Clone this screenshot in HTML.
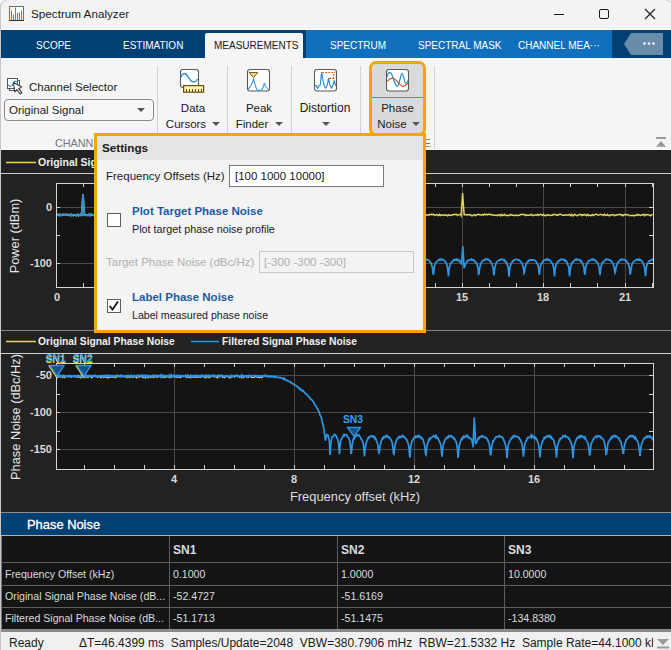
<!DOCTYPE html>
<html><head><meta charset="utf-8">
<style>
*{margin:0;padding:0;box-sizing:border-box}
html,body{width:671px;height:650px;overflow:hidden;background:#f3f3f3;font-family:"Liberation Sans",sans-serif;position:relative}
.a{position:absolute;white-space:nowrap}
.tab{position:absolute;top:41px;color:#fff;font-size:10px;line-height:10px;letter-spacing:0px}
.rb{position:absolute;color:#1a1a1a;font-size:11.5px;line-height:16px;text-align:center}
.sep{position:absolute;top:66px;width:1px;height:83px;background:#d2d2d2}
.arr{position:absolute;width:0;height:0;border-left:4px solid transparent;border-right:4px solid transparent;border-top:4px solid #555}
.lbl{position:absolute;font-size:11px;color:#d9d9d9;font-weight:bold;line-height:12px}
svg{position:absolute;left:0;top:0}
div{white-space:nowrap}
.grid{stroke:#4a4a4a;stroke-width:1}
.tick{stroke:#d0d0d0;stroke-width:1}
.tcell{position:absolute;font-size:10.6px;color:#dcdcdc;line-height:12px}
.st{position:absolute;top:637px;font-size:12px;color:#1a1a1a;line-height:12px}
</style></head><body>
<!-- window left border -->
<div class="a" style="left:0;top:0;width:1px;height:650px;background:#c8c8c8"></div>
<!-- title bar -->
<svg width="671" height="12" style="left:0;top:0">
  <path d="M0,0 L6,0 Q0.8,0.8 0,6 Z" fill="#f7f7f7"/>
  <path d="M0.6,7 Q0.9,0.9 6.5,0.5" stroke="#cdcdcd" stroke-width="1" fill="none"/>
  <path d="M666,0 Q670,0.8 671,2.5" stroke="#d0d0d0" stroke-width="1" fill="none"/>
</svg>
<svg width="30" height="30" style="left:0;top:0">
  <rect x="9.5" y="6.5" width="14" height="14" fill="#fff" stroke="#6e6e6e" stroke-width="1"/>
  <line x1="9" y1="20.5" x2="24" y2="20.5" stroke="#333" stroke-width="1"/>
  <g stroke="#3b8fd4" stroke-width="1.1">
    <line x1="11.5" y1="20" x2="11.5" y2="10.5"/>
    <line x1="13.5" y1="20" x2="13.5" y2="14.5"/>
    <line x1="15.5" y1="20" x2="15.5" y2="7.5"/>
    <line x1="17.5" y1="20" x2="17.5" y2="12.5"/>
    <line x1="19.5" y1="20" x2="19.5" y2="12.5"/>
    <line x1="21.5" y1="20" x2="21.5" y2="10.5"/>
  </g>
</svg>
<div class="a" style="left:31px;top:7px;font-size:11.7px;line-height:14px;color:#1a1a1a">Spectrum Analyzer</div>
<svg width="671" height="30" style="left:0;top:0">
  <line x1="554" y1="14.5" x2="564" y2="14.5" stroke="#1a1a1a" stroke-width="1"/>
  <rect x="599.5" y="9.5" width="9" height="9" rx="1.5" fill="none" stroke="#1a1a1a" stroke-width="1"/>
  <path d="M645,9 L655,19 M655,9 L645,19" stroke="#1a1a1a" stroke-width="1.1"/>
</svg>

<!-- tab bar -->
<div class="a" style="left:1px;top:29px;width:670px;height:1px;background:#fdfdfd"></div>
<div class="a" style="left:1px;top:30px;width:670px;height:28px;background:#023f73"></div>
<div class="a" style="left:306px;top:30px;width:306px;height:28px;background:#1170bd"></div>
<div class="a" style="left:205px;top:33px;width:98px;height:25px;background:#f5f5f5;border-radius:2px 2px 0 0"></div>
<div class="tab" style="left:36px">SCOPE</div>
<div class="tab" style="left:123px">ESTIMATION</div>
<div class="tab" style="left:214px;color:#1a1a1a">MEASUREMENTS</div>
<div class="tab" style="left:330px">SPECTRUM</div>
<div class="tab" style="left:418px">SPECTRAL MASK</div>
<div class="tab" style="left:518px">CHANNEL MEA···</div>
<svg width="671" height="60" style="left:0;top:0">
  <path d="M624,44 L631,33 L663,33 L663,55 L631,55 Z" fill="#6a8cab"/>
  <circle cx="644.5" cy="43.5" r="1.3" fill="#fff"/>
  <circle cx="649" cy="43.5" r="1.3" fill="#fff"/>
  <circle cx="653.5" cy="43.5" r="1.3" fill="#fff"/>
</svg>

<!-- ribbon -->
<div class="a" style="left:1px;top:58px;width:670px;height:92px;background:#f5f5f5"></div>
<svg width="30" height="30" style="left:0;top:70px">
  <g transform="translate(0,-70)">
  <rect x="9.5" y="80.5" width="10" height="10" fill="#fff" stroke="#555" stroke-width="1"/>
  <rect x="7.5" y="78.5" width="10" height="10" fill="#fff" stroke="#555" stroke-width="1"/>
  <path d="M8,84.5 C10,87.5 12,86.5 13,84 C14,81 16.5,80.5 17.5,82.5" stroke="#2a8ad8" stroke-width="1.1" fill="none"/>
  <path d="M13.4,82.6 L14.8,91.8 L16.9,89.7 L20.1,94 L21.9,92.8 L18.8,88.7 L21.8,86.9 Z" fill="#fff" stroke="#3a3a3a" stroke-width="1.1" stroke-linejoin="round"/>
  </g>
</svg>
<div class="a" style="left:29px;top:80px;font-size:11.5px;line-height:14px;color:#1a1a1a">Channel Selector</div>
<div class="a" style="left:4px;top:99px;width:150px;height:22px;border:1px solid #8a8a8a;border-radius:4px;background:#f7f7f7"></div>
<div class="a" style="left:9px;top:103px;font-size:11.5px;line-height:14px;color:#1a1a1a">Original Signal</div>
<div class="arr" style="left:137px;top:108px"></div>
<div class="a" style="left:55px;top:138px;font-size:10.8px;line-height:10px;color:#6f7882">CHANNELS</div>

<div class="sep" style="left:157px"></div>
<div class="sep" style="left:227px"></div>
<div class="sep" style="left:291px"></div>
<div class="sep" style="left:360px"></div>
<div class="sep" style="left:434px"></div>

<!-- Data cursors icon -->
<svg width="40" height="40" style="left:170px;top:60px">
  <rect x="10.5" y="9.5" width="18" height="18" rx="2.5" fill="#fff" stroke="#5a5a5a" stroke-width="1.1"/>
  <path d="M11,17.2 C12.5,12.3 16,12.5 18.5,17.5 C21,22.5 25,23.5 27.7,19" stroke="#1f86d4" stroke-width="1.2" fill="none"/>
  <rect x="13.6" y="25.6" width="20" height="6.6" fill="#fff3b8" stroke="#6b5200" stroke-width="1.2"/>
  <path d="M16.5,29 v3 M19.5,29 v3 M22.5,29 v3 M25.5,29 v3 M28.5,29 v3 M31.5,29 v3" stroke="#6b5200" stroke-width="1"/>
</svg>
<div class="rb" style="left:160px;top:100px;width:66px">Data</div>
<div class="rb" style="left:164px;top:116px;width:44px">Cursors</div>
<div class="arr" style="left:212px;top:122px"></div>

<!-- Peak finder icon -->
<svg width="40" height="40" style="left:240px;top:60px">
  <rect x="7.5" y="9.5" width="22" height="21.5" rx="2.5" fill="#fff" stroke="#5a5a5a" stroke-width="1.1"/>
  <path d="M8,29.5 Q11.5,26 13.6,19.2 Q15.5,27 17,29.5 Q19,31.5 21.5,30 Q23,28.5 24.4,23 Q25.5,28 29,29.5" stroke="#3a95e0" stroke-width="1.1" fill="none"/>
  <path d="M9.2,12.6 L17.8,12.6 L13.5,17.4 Z" fill="#f7e98f" stroke="#6b5200" stroke-width="1" stroke-linejoin="round"/>
</svg>
<div class="rb" style="left:226px;top:100px;width:66px">Peak</div>
<div class="rb" style="left:234px;top:116px;width:36px">Finder</div>
<div class="arr" style="left:275px;top:122px"></div>

<!-- Distortion icon -->
<svg width="40" height="40" style="left:306px;top:60px">
  <rect x="8.5" y="9.5" width="22" height="21.5" rx="2.5" fill="#fff" stroke="#5a5a5a" stroke-width="1.1"/>
  <path d="M16.2,12.5 H29.5 M27.6,14 V17.5 M23.2,18.4 H29.5" stroke="#e0501c" stroke-width="1.1" fill="none" stroke-dasharray="1.8,1.3"/>
  <path d="M8.9,25.6 L10.3,25.6 L11.5,28.5 L13,25.6 L14.2,25.3 L15.6,12.5 L16.9,19.9 L18.1,25.6 L19.6,28.2 L21.1,25.6 L22.6,18.4 L23.8,24.7 L25.5,28.2 L27,25.3 L28.2,20.5 L29.7,25.6" stroke="#1f86d4" stroke-width="1.1" fill="none" stroke-linejoin="round"/>
</svg>
<div class="rb" style="left:291px;top:100px;width:68px;font-size:12px">Distortion</div>
<div class="arr" style="left:322px;top:122px"></div>

<!-- Phase noise button (active) -->
<div class="a" style="left:369px;top:61px;width:57px;height:75px;border:3px solid #f5a500;border-radius:7px;background:#dadada"></div>
<div class="a" style="left:372px;top:97px;width:51px;height:1px;background:#3d8fd6"></div>
<svg width="40" height="40" style="left:378px;top:60px">
  <rect x="8.5" y="9.5" width="22" height="21.5" rx="2.5" fill="#fff" stroke="#5a5a5a" stroke-width="1.1"/>
  <path d="M9,21.4 C10.5,19.5 12.5,18.1 14.5,18.1 C18.5,18.1 21.5,26.4 25,26.4 C27,26.4 28.8,24.5 30,23.2" stroke="#e0561e" stroke-width="1.2" fill="none"/>
  <path d="M8.9,17 C9.8,13.5 10.8,12.4 12.1,12.4 C14.5,12.4 16.5,26.3 19.3,26.3 C21.5,26.3 22.4,13.3 24,13.3 C25.6,13.3 26.3,23.5 27.9,23.5 C28.8,23.5 29.6,21.5 29.9,20.5" stroke="#1f86d4" stroke-width="1.2" fill="none"/>
</svg>
<div class="rb" style="left:369px;top:100px;width:57px">Phase</div>
<div class="rb" style="left:375px;top:116px;width:34px">Noise</div>
<div class="arr" style="left:412px;top:122px"></div>
<div class="a" style="left:345.5px;top:138px;width:100px;text-align:center;font-size:10.5px;line-height:10px;color:#6f7882">PHASE NOISE</div>

<svg width="20" height="20" style="left:650px;top:136px">
  <rect x="6" y="1" width="10" height="2" fill="#9a9a9a"/>
  <path d="M6,10.8 L11,5 L16,10.8 Z" fill="#9a9a9a"/>
</svg>

<!-- plot area background -->
<div class="a" style="left:1px;top:149px;width:670px;height:1px;background:#fcfcfc"></div>
<div class="a" style="left:1px;top:150px;width:670px;height:362px;background:#222222"></div>
<div class="a" style="left:1px;top:173px;width:670px;height:1px;background:#cdcdcd"></div>
<div class="a" style="left:1px;top:330px;width:670px;height:1px;background:#858585"></div>
<div class="a" style="left:1px;top:353px;width:670px;height:1px;background:#d2d2d2"></div>

<!-- plot 1 -->
<svg width="671" height="650">
  <rect x="56" y="183" width="598" height="105" fill="#141414"/>
  <line x1="56.5" y1="183" x2="56.5" y2="187" class="tick"/>
<line x1="56.5" y1="283" x2="56.5" y2="287" class="tick"/>
<line x1="83.5" y1="183" x2="83.5" y2="187" class="tick"/>
<line x1="83.5" y1="283" x2="83.5" y2="287" class="tick"/>
<line x1="110.5" y1="183" x2="110.5" y2="187" class="tick"/>
<line x1="110.5" y1="283" x2="110.5" y2="287" class="tick"/>
<line x1="137.5" y1="183" x2="137.5" y2="287" class="grid"/>
<line x1="137.5" y1="183" x2="137.5" y2="187" class="tick"/>
<line x1="137.5" y1="283" x2="137.5" y2="287" class="tick"/>
<line x1="164.5" y1="183" x2="164.5" y2="187" class="tick"/>
<line x1="164.5" y1="283" x2="164.5" y2="287" class="tick"/>
<line x1="191.5" y1="183" x2="191.5" y2="187" class="tick"/>
<line x1="191.5" y1="283" x2="191.5" y2="287" class="tick"/>
<line x1="219.5" y1="183" x2="219.5" y2="287" class="grid"/>
<line x1="219.5" y1="183" x2="219.5" y2="187" class="tick"/>
<line x1="219.5" y1="283" x2="219.5" y2="287" class="tick"/>
<line x1="246.5" y1="183" x2="246.5" y2="187" class="tick"/>
<line x1="246.5" y1="283" x2="246.5" y2="287" class="tick"/>
<line x1="273.5" y1="183" x2="273.5" y2="187" class="tick"/>
<line x1="273.5" y1="283" x2="273.5" y2="287" class="tick"/>
<line x1="300.5" y1="183" x2="300.5" y2="287" class="grid"/>
<line x1="300.5" y1="183" x2="300.5" y2="187" class="tick"/>
<line x1="300.5" y1="283" x2="300.5" y2="287" class="tick"/>
<line x1="327.5" y1="183" x2="327.5" y2="187" class="tick"/>
<line x1="327.5" y1="283" x2="327.5" y2="287" class="tick"/>
<line x1="354.5" y1="183" x2="354.5" y2="187" class="tick"/>
<line x1="354.5" y1="283" x2="354.5" y2="287" class="tick"/>
<line x1="381.5" y1="183" x2="381.5" y2="287" class="grid"/>
<line x1="381.5" y1="183" x2="381.5" y2="187" class="tick"/>
<line x1="381.5" y1="283" x2="381.5" y2="287" class="tick"/>
<line x1="408.5" y1="183" x2="408.5" y2="187" class="tick"/>
<line x1="408.5" y1="283" x2="408.5" y2="287" class="tick"/>
<line x1="435.5" y1="183" x2="435.5" y2="187" class="tick"/>
<line x1="435.5" y1="283" x2="435.5" y2="287" class="tick"/>
<line x1="462.5" y1="183" x2="462.5" y2="287" class="grid"/>
<line x1="462.5" y1="183" x2="462.5" y2="187" class="tick"/>
<line x1="462.5" y1="283" x2="462.5" y2="287" class="tick"/>
<line x1="489.5" y1="183" x2="489.5" y2="187" class="tick"/>
<line x1="489.5" y1="283" x2="489.5" y2="287" class="tick"/>
<line x1="516.5" y1="183" x2="516.5" y2="187" class="tick"/>
<line x1="516.5" y1="283" x2="516.5" y2="287" class="tick"/>
<line x1="543.5" y1="183" x2="543.5" y2="287" class="grid"/>
<line x1="543.5" y1="183" x2="543.5" y2="187" class="tick"/>
<line x1="543.5" y1="283" x2="543.5" y2="287" class="tick"/>
<line x1="570.5" y1="183" x2="570.5" y2="187" class="tick"/>
<line x1="570.5" y1="283" x2="570.5" y2="287" class="tick"/>
<line x1="597.5" y1="183" x2="597.5" y2="187" class="tick"/>
<line x1="597.5" y1="283" x2="597.5" y2="287" class="tick"/>
<line x1="625.5" y1="183" x2="625.5" y2="287" class="grid"/>
<line x1="625.5" y1="183" x2="625.5" y2="187" class="tick"/>
<line x1="625.5" y1="283" x2="625.5" y2="287" class="tick"/>
<line x1="652.5" y1="183" x2="652.5" y2="187" class="tick"/>
<line x1="652.5" y1="283" x2="652.5" y2="287" class="tick"/>
<line x1="56" y1="207.5" x2="653" y2="207.5" class="grid"/>
<line x1="56" y1="263.5" x2="653" y2="263.5" class="grid"/>
<line x1="56" y1="207.5" x2="60" y2="207.5" class="tick"/>
<line x1="649" y1="207.5" x2="653" y2="207.5" class="tick"/>
<line x1="56" y1="235.5" x2="60" y2="235.5" class="tick"/>
<line x1="649" y1="235.5" x2="653" y2="235.5" class="tick"/>
<line x1="56" y1="263.5" x2="60" y2="263.5" class="tick"/>
<line x1="649" y1="263.5" x2="653" y2="263.5" class="tick"/>
  <path d="M56.5,214.7 L57.5,214.4 L58.5,215.2 L59.5,214.3 L60.5,215.1 L61.5,214.8 L62.5,214.3 L63.5,215.0 L64.5,214.3 L65.5,214.9 L66.5,214.3 L67.5,214.3 L68.5,214.9 L69.5,215.5 L70.5,214.4 L71.5,214.6 L72.5,215.2 L73.5,215.7 L74.5,215.1 L75.5,214.8 L76.5,215.8 L77.5,214.3 L78.5,215.6 L79.5,214.7 L80.5,214.4 L81.5,214.4 L84.5,214.5 L81.5,214.7 L83.0,194.0 L84.5,215.1 L85.5,215.1 L86.5,215.2 L87.5,214.8 L88.5,215.1 L89.5,214.3 L90.5,214.3 L91.5,214.5 L92.5,215.3 L93.5,214.9 L94.5,214.7 L95.5,215.1 L96.5,214.9 L97.5,214.7 L98.5,215.5 L99.5,215.3 L100.5,214.6 L101.5,215.1 L102.5,215.0 L103.5,215.6 L104.5,215.4 L105.5,214.7 L106.5,215.8 L107.5,214.4 L108.5,214.9 L109.5,215.4 L110.5,214.4 L111.5,215.0 L112.5,214.3 L113.5,215.3 L114.5,215.4 L115.5,215.1 L116.5,215.6 L117.5,214.7 L118.5,215.3 L119.5,215.2 L120.5,215.1 L121.5,214.9 L122.5,215.5 L123.5,215.7 L124.5,215.0 L125.5,215.3 L126.5,214.3 L127.5,215.3 L128.5,215.2 L129.5,215.8 L130.5,215.5 L131.5,214.7 L132.5,214.8 L133.5,215.3 L134.5,214.2 L135.5,214.9 L136.5,214.5 L137.5,214.4 L138.5,214.3 L139.5,215.4 L140.5,214.4 L141.5,214.6 L142.5,214.8 L143.5,215.6 L144.5,214.3 L145.5,214.9 L146.5,215.1 L147.5,215.6 L148.5,215.5 L149.5,215.6 L150.5,214.6 L151.5,214.9 L152.5,214.8 L153.5,215.6 L154.5,215.7 L155.5,214.4 L156.5,214.5 L157.5,214.6 L158.5,214.6 L159.5,215.0 L160.5,215.1 L161.5,214.6 L162.5,214.2 L163.5,214.9 L164.5,214.8 L165.5,215.1 L166.5,215.7 L167.5,215.3 L168.5,215.0 L169.5,215.2 L170.5,215.3 L171.5,214.3 L172.5,215.6 L173.5,215.4 L174.5,215.6 L175.5,215.5 L176.5,214.8 L177.5,214.8 L178.5,214.4 L179.5,215.2 L180.5,214.3 L181.5,214.3 L182.5,214.5 L183.5,214.5 L184.5,214.7 L185.5,214.3 L186.5,214.2 L187.5,214.4 L188.5,214.4 L189.5,214.8 L190.5,214.2 L191.5,215.6 L192.5,215.2 L193.5,214.4 L194.5,214.6 L195.5,214.8 L196.5,214.8 L197.5,214.4 L198.5,215.6 L199.5,215.8 L200.5,214.9 L201.5,215.0 L202.5,214.3 L203.5,214.4 L204.5,214.7 L205.5,214.6 L206.5,215.5 L207.5,214.5 L208.5,214.2 L209.5,215.7 L210.5,215.0 L211.5,214.4 L212.5,215.1 L213.5,214.2 L214.5,215.0 L215.5,215.8 L216.5,215.6 L217.5,215.3 L218.5,214.6 L219.5,214.8 L220.5,214.5 L221.5,215.4 L222.5,215.1 L223.5,215.4 L224.5,214.7 L225.5,214.6 L226.5,215.5 L227.5,215.8 L228.5,215.6 L229.5,215.5 L230.5,215.5 L231.5,215.4 L232.5,214.6 L233.5,215.0 L234.5,214.8 L235.5,214.2 L236.5,214.2 L237.5,214.6 L238.5,214.6 L239.5,215.3 L240.5,215.7 L241.5,214.9 L242.5,215.7 L243.5,215.8 L244.5,215.7 L245.5,214.8 L246.5,214.6 L247.5,214.6 L248.5,214.5 L249.5,214.5 L250.5,215.2 L251.5,215.6 L252.5,215.5 L253.5,215.0 L254.5,215.2 L255.5,215.5 L256.5,214.3 L257.5,215.3 L258.5,215.7 L259.5,215.5 L260.5,215.4 L261.5,215.0 L262.5,214.5 L263.5,215.5 L264.5,214.7 L265.5,215.5 L266.5,215.8 L267.5,214.8 L268.5,214.8 L269.5,215.7 L270.5,215.4 L271.5,214.5 L272.5,214.4 L273.5,214.4 L274.5,215.6 L275.5,215.5 L276.5,214.4 L277.5,215.5 L278.5,215.8 L279.5,215.3 L280.5,214.8 L281.5,215.1 L282.5,214.4 L283.5,214.2 L284.5,215.8 L285.5,215.2 L286.5,215.0 L287.5,215.7 L288.5,214.9 L289.5,215.6 L290.5,215.5 L291.5,214.5 L292.5,214.6 L293.5,214.7 L294.5,214.6 L295.5,215.1 L296.5,214.6 L297.5,214.9 L298.5,214.4 L299.5,215.7 L300.5,214.8 L301.5,214.9 L302.5,215.1 L303.5,215.6 L304.5,214.9 L305.5,215.7 L306.5,215.0 L307.5,215.1 L308.5,215.0 L309.5,214.2 L310.5,214.9 L311.5,214.5 L312.5,214.2 L313.5,215.5 L314.5,214.5 L315.5,215.0 L316.5,215.4 L317.5,215.1 L318.5,214.7 L319.5,215.0 L320.5,215.1 L321.5,215.5 L322.5,214.4 L323.5,215.1 L324.5,214.6 L325.5,214.6 L326.5,215.4 L327.5,215.0 L328.5,215.1 L329.5,215.4 L330.5,215.7 L331.5,214.9 L332.5,215.2 L333.5,215.0 L334.5,215.0 L335.5,215.3 L336.5,214.9 L337.5,215.1 L338.5,215.0 L339.5,215.7 L340.5,215.3 L341.5,215.6 L342.5,215.7 L343.5,214.6 L344.5,215.1 L345.5,215.7 L346.5,215.5 L347.5,214.4 L348.5,214.4 L349.5,214.9 L350.5,214.3 L351.5,214.6 L352.5,214.3 L353.5,215.3 L354.5,215.5 L355.5,215.6 L356.5,214.4 L357.5,215.3 L358.5,215.3 L359.5,214.4 L360.5,215.6 L361.5,215.7 L362.5,214.6 L363.5,215.7 L364.5,214.8 L365.5,215.0 L366.5,215.8 L367.5,215.5 L368.5,214.5 L369.5,214.9 L370.5,215.0 L371.5,214.7 L372.5,214.5 L373.5,214.7 L374.5,215.4 L375.5,214.2 L376.5,215.1 L377.5,214.9 L378.5,214.2 L379.5,214.7 L380.5,215.2 L381.5,215.0 L382.5,214.3 L383.5,215.8 L384.5,215.5 L385.5,215.8 L386.5,214.4 L387.5,214.6 L388.5,214.3 L389.5,215.4 L390.5,214.6 L391.5,214.4 L392.5,214.9 L393.5,215.7 L394.5,215.5 L395.5,214.6 L396.5,214.4 L397.5,215.7 L398.5,215.1 L399.5,215.3 L400.5,214.3 L401.5,214.3 L402.5,215.3 L403.5,214.9 L404.5,214.3 L405.5,215.7 L406.5,215.2 L407.5,215.5 L408.5,214.3 L409.5,215.6 L410.5,214.3 L411.5,215.6 L412.5,214.9 L413.5,214.7 L414.5,215.1 L415.5,215.7 L416.5,214.6 L417.5,214.4 L418.5,215.0 L419.5,214.6 L420.5,214.4 L421.5,214.5 L422.5,214.3 L423.5,214.5 L424.5,214.7 L425.5,214.7 L426.5,215.4 L427.5,214.7 L428.5,215.0 L429.5,214.5 L430.5,214.8 L431.5,214.2 L432.5,214.6 L433.5,214.2 L434.5,215.4 L435.5,215.1 L436.5,214.5 L437.5,215.0 L438.5,215.7 L439.5,214.4 L440.5,215.5 L441.5,214.9 L442.5,215.0 L443.5,215.5 L444.5,214.8 L445.5,215.0 L446.5,215.3 L447.5,215.8 L448.5,214.7 L449.5,215.5 L450.5,215.3 L451.5,215.2 L452.5,214.8 L453.5,214.8 L454.5,214.3 L455.5,214.4 L456.5,214.3 L457.5,215.4 L458.5,214.6 L459.5,214.5 L460.5,214.3 L461.1,215.5 L462.6,193.0 L464.1,214.7 L464.5,214.7 L465.5,214.6 L466.5,214.7 L467.5,214.9 L468.5,214.5 L469.5,214.9 L470.5,214.6 L471.5,215.7 L472.5,215.8 L473.5,215.1 L474.5,214.6 L475.5,215.7 L476.5,214.7 L477.5,214.8 L478.5,214.2 L479.5,214.8 L480.5,215.0 L481.5,215.0 L482.5,214.5 L483.5,215.0 L484.5,214.2 L485.5,214.6 L486.5,214.3 L487.5,214.8 L488.5,214.3 L489.5,214.2 L490.5,214.7 L491.5,214.6 L492.5,215.1 L493.5,215.0 L494.5,215.4 L495.5,215.3 L496.5,215.3 L497.5,215.6 L498.5,214.8 L499.5,214.7 L500.5,215.8 L501.5,214.4 L502.5,215.4 L503.5,215.2 L504.5,214.3 L505.5,215.5 L506.5,215.6 L507.5,215.2 L508.5,215.4 L509.5,215.5 L510.5,214.4 L511.5,215.0 L512.5,215.0 L513.5,215.5 L514.5,215.5 L515.5,215.5 L516.5,215.1 L517.5,215.6 L518.5,215.3 L519.5,215.3 L520.5,214.6 L521.5,214.2 L522.5,214.4 L523.5,214.8 L524.5,214.4 L525.5,215.5 L526.5,215.1 L527.5,215.2 L528.5,215.2 L529.5,215.3 L530.5,215.0 L531.5,214.2 L532.5,215.5 L533.5,215.4 L534.5,215.0 L535.5,215.1 L536.5,215.3 L537.5,214.3 L538.5,215.4 L539.5,214.6 L540.5,214.3 L541.5,214.6 L542.5,215.4 L543.5,214.5 L544.5,215.4 L545.5,215.8 L546.5,215.0 L547.5,214.8 L548.5,215.0 L549.5,215.3 L550.5,215.4 L551.5,215.2 L552.5,215.2 L553.5,214.3 L554.5,214.4 L555.5,214.6 L556.5,215.4 L557.5,214.7 L558.5,215.1 L559.5,214.2 L560.5,214.3 L561.5,214.6 L562.5,215.3 L563.5,215.3 L564.5,215.3 L565.5,214.7 L566.5,215.0 L567.5,214.9 L568.5,214.9 L569.5,214.4 L570.5,215.6 L571.5,214.5 L572.5,215.8 L573.5,215.7 L574.5,214.2 L575.5,214.9 L576.5,215.5 L577.5,215.7 L578.5,214.9 L579.5,214.6 L580.5,214.5 L581.5,215.7 L582.5,214.5 L583.5,215.1 L584.5,214.4 L585.5,215.0 L586.5,215.7 L587.5,214.4 L588.5,215.5 L589.5,215.0 L590.5,215.6 L591.5,215.3 L592.5,214.6 L593.5,215.6 L594.5,215.0 L595.5,214.2 L596.5,214.2 L597.5,215.0 L598.5,214.9 L599.5,214.7 L600.5,214.4 L601.5,214.8 L602.5,214.7 L603.5,215.5 L604.5,214.2 L605.5,215.4 L606.5,215.5 L607.5,214.4 L608.5,215.7 L609.5,215.3 L610.5,215.6 L611.5,214.7 L612.5,214.8 L613.5,214.8 L614.5,215.8 L615.5,215.1 L616.5,214.8 L617.5,214.9 L618.5,214.6 L619.5,214.3 L620.5,214.4 L621.5,215.5 L622.5,214.7 L623.5,215.7 L624.5,214.6 L625.5,214.6 L626.5,215.0 L627.5,214.5 L628.5,214.8 L629.5,215.7 L630.5,215.6 L631.5,215.5 L632.5,215.2 L633.5,215.7 L634.5,215.7 L635.5,215.1 L636.5,215.4 L637.5,214.3 L638.5,215.4 L639.5,214.9 L640.5,215.4 L641.5,215.2 L642.5,214.7 L643.5,214.3 L644.5,215.7 L645.5,214.4 L646.5,215.0 L647.5,214.7 L648.5,214.7 L649.5,215.4 L650.5,215.8 L651.5,214.6 L652.5,215.2" stroke="#e8d44a" stroke-width="1.5" fill="none"/>
  <path d="M56.5,214.7 L57.0,215.1 L57.5,214.9 L58.0,214.5 L58.5,214.5 L59.0,214.6 L59.5,215.6 L60.0,215.0 L60.5,214.6 L61.0,215.6 L61.5,215.7 L62.0,214.9 L62.5,214.5 L63.0,214.6 L63.5,214.4 L64.0,214.8 L64.5,214.4 L65.0,214.6 L65.5,214.7 L66.0,215.1 L66.5,215.5 L67.0,215.3 L67.5,214.9 L68.0,214.9 L68.5,215.0 L69.0,214.8 L69.5,214.8 L70.0,214.4 L70.5,214.7 L71.0,215.7 L71.5,214.5 L72.0,215.0 L72.5,215.2 L73.0,215.5 L73.5,214.6 L74.0,214.7 L74.5,214.6 L75.0,214.9 L75.5,214.9 L76.0,215.6 L76.5,215.5 L77.0,215.5 L77.5,214.3 L78.0,214.3 L78.5,215.3 L79.0,215.6 L79.5,215.0 L80.0,215.1 L80.5,214.3 L81.0,214.8 L81.5,215.6 L84.5,214.5 L81.5,215.5 L83.0,194.0 L84.5,215.0 L85.0,215.0 L85.5,215.3 L86.0,215.6 L86.5,215.3 L87.0,215.2 L87.5,215.4 L88.0,214.9 L88.5,215.1 L89.0,214.4 L89.5,215.4 L90.0,214.6 L90.5,215.6 L91.0,215.2 L91.5,214.7 L92.0,214.5 L92.5,214.7 L93.0,215.2 L93.5,215.3 L94.0,214.5 L94.5,214.4 L95.0,215.0 L95.5,215.1 L96.0,214.8 L96.5,214.6 L97.0,215.1 L97.5,214.3 L98.0,214.7 L98.5,214.9 L99.0,215.6 L99.5,215.2 L100.0,215.5 L100.5,215.0 L101.0,214.6 L101.5,214.6 L102.0,215.6 L102.5,215.3 L103.0,214.7 L103.5,214.3 L104.0,215.0 L104.5,215.2 L105.0,214.9 L105.5,214.7 L106.0,215.2 L106.5,215.6 L107.0,214.6 L107.5,214.3 L108.0,214.8 L108.5,214.9 L109.0,215.3 L109.5,214.6 L110.0,215.4 L110.5,215.3 L111.0,215.0 L111.5,214.6 L112.0,215.7 L112.5,214.7 L113.0,215.4 L113.5,214.6 L114.0,214.6 L114.5,215.4 L115.0,214.7 L115.5,215.6 L116.0,215.0 L116.5,214.6 L117.0,214.6 L117.5,214.9 L118.0,215.2 L118.5,215.6 L119.0,214.5 L119.5,214.9 L120.0,214.6 L120.5,215.7 L121.0,214.5 L121.5,214.4 L122.0,214.4 L122.5,214.9 L123.0,215.6 L123.5,215.5 L124.0,215.3 L124.5,215.7 L125.0,215.6 L125.5,214.8 L126.0,214.6 L126.5,215.6 L127.0,215.3 L127.5,214.3 L128.0,215.2 L128.5,214.8 L129.0,214.8 L129.5,214.8 L130.0,214.5 L130.5,214.3 L131.0,214.7 L131.5,214.8 L132.0,215.6 L132.5,214.5 L133.0,215.6 L133.5,214.6 L134.0,214.8 L134.5,215.5 L135.0,215.5 L135.5,214.9 L136.0,214.4 L136.5,215.0 L137.0,214.8 L137.5,215.6 L138.0,214.6 L138.5,214.8 L139.0,215.6 L139.5,214.3 L140.0,214.9 L140.5,215.4 L141.0,215.4 L141.5,214.4 L142.0,214.3 L142.5,214.4 L143.0,215.6 L143.5,214.7 L144.0,215.3 L144.5,215.6 L145.0,214.8 L145.5,214.7 L146.0,215.6 L146.5,215.2 L147.0,214.7 L147.5,215.3 L148.0,214.7 L148.5,214.7 L149.0,214.3 L149.5,215.4 L150.0,215.6 L150.5,215.2 L151.0,215.6 L151.5,214.3 L152.0,214.6 L152.5,215.0 L153.0,215.6 L153.5,215.6 L154.0,214.8 L154.5,214.7 L155.0,214.9 L155.5,215.0 L156.0,215.6 L156.5,214.6 L157.0,215.4 L157.5,215.3 L158.0,215.5 L158.5,215.4 L159.0,215.2 L159.5,214.8 L160.0,214.7 L160.5,214.8 L161.0,215.4 L161.5,214.4 L162.0,214.6 L162.5,215.4 L163.0,214.6 L163.5,214.4 L164.0,214.3 L164.5,215.1 L165.0,214.8 L165.5,215.7 L166.0,215.5 L166.5,215.7 L167.0,214.7 L167.5,214.4 L168.0,214.4 L168.5,215.0 L169.0,215.3 L169.5,214.9 L170.0,214.6 L170.5,214.9 L171.0,215.2 L171.5,215.2 L172.0,215.3 L172.5,215.5 L173.0,215.2 L173.5,214.5 L174.0,215.5 L174.5,214.7 L175.0,215.1 L175.5,214.8 L176.0,215.3 L176.5,214.6 L177.0,214.6 L177.5,214.6 L178.0,214.5 L178.5,215.5 L179.0,215.1 L179.5,214.8 L180.0,214.9 L180.5,215.7 L181.0,215.0 L181.5,214.6 L182.0,215.4 L182.5,215.2 L183.0,215.7 L183.5,214.4 L184.0,215.0 L184.5,215.4 L185.0,215.5 L185.5,215.6 L186.0,214.4 L186.5,214.7 L187.0,214.5 L187.5,214.6 L188.0,215.7 L188.5,215.1 L189.0,215.6 L189.5,214.8 L190.0,215.5 L190.5,214.9 L191.0,214.7 L191.5,215.4 L192.0,215.6 L192.5,214.4 L193.0,215.1 L193.5,215.2 L194.0,214.6 L194.5,214.8 L195.0,214.5 L195.5,214.6 L196.0,214.7 L196.5,215.1 L197.0,215.2 L197.5,214.6 L198.0,214.3 L198.5,214.8 L199.0,215.2 L199.5,214.6 L200.0,215.0 L200.5,215.0 L201.0,215.0 L201.5,215.0 L202.0,215.0 L202.5,215.0 L203.0,215.0 L203.5,215.0 L204.0,215.0 L204.5,215.0 L205.0,215.0 L205.5,215.0 L206.0,215.0 L206.5,215.1 L207.0,215.1 L207.5,215.1 L208.0,215.1 L208.5,215.1 L209.0,215.1 L209.5,215.1 L210.0,215.1 L210.5,215.1 L211.0,215.1 L211.5,215.2 L212.0,215.2 L212.5,215.2 L213.0,215.2 L213.5,215.2 L214.0,215.2 L214.5,215.2 L215.0,215.3 L215.5,215.3 L216.0,215.3 L216.5,215.3 L217.0,215.3 L217.5,215.4 L218.0,215.4 L218.5,215.4 L219.0,215.4 L219.5,215.4 L220.0,215.5 L220.5,215.5 L221.0,215.5 L221.5,215.5 L222.0,215.6 L222.5,215.6 L223.0,215.6 L223.5,215.7 L224.0,215.7 L224.5,215.7 L225.0,215.7 L225.5,215.8 L226.0,215.8 L226.5,215.8 L227.0,215.9 L227.5,215.9 L228.0,215.9 L228.5,216.0 L229.0,216.0 L229.5,216.0 L230.0,216.1 L230.5,216.1 L231.0,216.1 L231.5,216.2 L232.0,216.2 L232.5,216.2 L233.0,216.3 L233.5,216.3 L234.0,216.4 L234.5,216.4 L235.0,216.4 L235.5,216.5 L236.0,216.5 L236.5,216.6 L237.0,216.6 L237.5,216.7 L238.0,216.7 L238.5,216.8 L239.0,216.8 L239.5,216.8 L240.0,216.9 L240.5,216.9 L241.0,217.0 L241.5,217.0 L242.0,217.1 L242.5,217.1 L243.0,217.2 L243.5,217.2 L244.0,217.3 L244.5,217.3 L245.0,217.4 L245.5,217.4 L246.0,217.5 L246.5,217.6 L247.0,217.6 L247.5,217.7 L248.0,217.7 L248.5,217.8 L249.0,217.8 L249.5,217.9 L250.0,218.0 L250.5,218.0 L251.0,218.1 L251.5,218.1 L252.0,218.2 L252.5,218.3 L253.0,218.3 L253.5,218.4 L254.0,218.5 L254.5,218.5 L255.0,218.6 L255.5,218.6 L256.0,218.7 L256.5,218.8 L257.0,218.8 L257.5,218.9 L258.0,219.0 L258.5,219.1 L259.0,219.1 L259.5,219.2 L260.0,219.3 L260.5,219.3 L261.0,219.4 L261.5,219.5 L262.0,219.5 L262.5,219.6 L263.0,219.7 L263.5,219.8 L264.0,219.8 L264.5,219.9 L265.0,220.0 L265.5,220.1 L266.0,220.2 L266.5,220.2 L267.0,220.3 L267.5,220.4 L268.0,220.5 L268.5,220.6 L269.0,220.6 L269.5,220.7 L270.0,220.8 L270.5,220.9 L271.0,221.0 L271.5,221.1 L272.0,221.1 L272.5,221.2 L273.0,221.3 L273.5,221.4 L274.0,221.5 L274.5,221.6 L275.0,221.7 L275.5,221.7 L276.0,221.8 L276.5,221.9 L277.0,222.0 L277.5,222.1 L278.0,222.2 L278.5,222.3 L279.0,222.4 L279.5,222.5 L280.0,222.6 L280.5,222.7 L281.0,222.8 L281.5,222.9 L282.0,223.0 L282.5,223.1 L283.0,223.2 L283.5,223.3 L284.0,223.4 L284.5,223.4 L285.0,223.6 L285.5,223.7 L286.0,223.8 L286.5,223.9 L287.0,224.0 L287.5,224.1 L288.0,224.2 L288.5,224.3 L289.0,224.4 L289.5,224.5 L290.0,224.6 L290.5,224.7 L291.0,224.8 L291.5,224.9 L292.0,225.0 L292.5,225.1 L293.0,225.2 L293.5,225.3 L294.0,225.5 L294.5,225.6 L295.0,225.7 L295.5,225.8 L296.0,225.9 L296.5,226.0 L297.0,226.1 L297.5,226.2 L298.0,226.4 L298.5,226.5 L299.0,226.6 L299.5,226.7 L300.0,226.8 L300.5,227.0 L301.0,227.1 L301.5,227.2 L302.0,227.3 L302.5,227.4 L303.0,227.6 L303.5,227.7 L304.0,227.8 L304.5,227.9 L305.0,228.0 L305.5,228.2 L306.0,228.3 L306.5,228.4 L307.0,228.5 L307.5,228.7 L308.0,228.8 L308.5,228.9 L309.0,229.1 L309.5,229.2 L310.0,229.3 L310.5,229.4 L311.0,229.6 L311.5,229.7 L312.0,229.8 L312.5,230.0 L313.0,230.1 L313.5,230.2 L314.0,230.4 L314.5,230.5 L315.0,230.7 L315.5,230.8 L316.0,230.9 L316.5,231.1 L317.0,231.2 L317.5,231.3 L318.0,231.5 L318.5,231.6 L319.0,231.8 L319.5,231.9 L320.0,232.0 L320.5,232.2 L321.0,232.3 L321.5,232.5 L322.0,232.6 L322.5,232.8 L323.0,232.9 L323.5,233.1 L324.0,233.2 L324.5,233.3 L325.0,233.5 L325.5,233.6 L326.0,233.8 L326.5,233.9 L327.0,234.1 L327.5,234.2 L328.0,234.4 L328.5,234.5 L329.0,234.7 L329.5,234.8 L330.0,235.0 L330.5,235.2 L331.0,235.3 L331.5,235.5 L332.0,235.6 L332.5,235.8 L333.0,235.9 L333.5,236.1 L334.0,236.2 L334.5,236.4 L335.0,236.6 L335.5,236.7 L336.0,236.9 L336.5,237.1 L337.0,237.2 L337.5,237.4 L338.0,237.5 L338.5,237.7 L339.0,237.9 L339.5,238.0 L340.0,238.2 L340.5,238.4 L341.0,238.5 L341.5,238.7 L342.0,238.9 L342.5,239.0 L343.0,239.2 L343.5,239.4 L344.0,239.5 L344.5,239.7 L345.0,239.9 L345.5,240.1 L346.0,240.2 L346.5,240.4 L347.0,240.6 L347.5,240.7 L348.0,240.9 L348.5,241.1 L349.0,241.3 L349.5,241.4 L350.0,241.6 L350.5,241.8 L351.0,242.0 L351.5,242.2 L352.0,242.3 L352.5,242.5 L353.0,242.7 L353.5,242.9 L354.0,243.1 L354.5,243.2 L355.0,243.4 L355.5,243.6 L356.0,243.8 L356.5,244.0 L357.0,244.2 L357.5,244.4 L358.0,244.5 L358.5,244.7 L359.0,244.9 L359.5,245.1 L360.0,245.3 L360.5,245.5 L361.0,245.7 L361.5,245.9 L362.0,246.1 L362.5,246.2 L363.0,246.4 L363.5,246.6 L364.0,246.8 L364.5,247.0 L365.0,247.2 L365.5,247.4 L366.0,247.6 L366.5,247.8 L367.0,248.0 L367.5,248.2 L368.0,248.4 L368.5,248.6 L369.0,248.8 L369.5,249.0 L370.0,249.2 L370.5,249.4 L371.0,249.6 L371.5,249.8 L372.0,250.0 L372.5,250.2 L373.0,250.4 L373.5,250.6 L374.0,250.8 L374.5,251.0 L375.0,251.2 L375.5,251.4 L376.0,251.7 L376.5,251.9 L377.0,252.1 L377.5,252.3 L378.0,252.5 L378.5,252.7 L379.0,252.9 L379.5,253.1 L380.0,253.3 L380.5,253.6 L381.0,253.8 L381.5,254.0 L382.0,254.2 L382.5,254.4 L383.0,254.6 L383.5,254.8 L384.0,255.1 L384.5,255.3 L385.0,255.5 L385.5,255.7 L386.0,255.9 L386.5,256.2 L387.0,256.4 L387.5,256.6 L388.0,256.8 L388.5,257.1 L389.0,257.3 L389.5,257.5 L390.0,257.7 L390.5,257.9 L391.0,258.2 L391.5,258.4 L392.0,258.6 L392.5,258.9 L393.0,259.1 L393.5,259.3 L394.0,259.5 L394.5,259.8 L395.0,259.2 L395.5,259.5 L396.0,259.1 L396.5,259.2 L397.0,259.7 L397.5,260.0 L398.0,260.4 L398.5,260.2 L399.0,260.6 L399.5,261.7 L400.0,262.0 L400.5,262.7 L401.0,263.7 L401.5,265.7 L402.0,267.0 L402.5,270.6 L403.0,276.3 L403.5,270.4 L404.0,267.6 L404.5,265.8 L405.0,263.8 L405.5,262.6 L406.0,262.4 L406.5,261.2 L407.0,260.5 L407.5,261.0 L408.0,260.2 L408.5,260.3 L409.0,259.7 L409.5,260.0 L410.0,259.5 L410.5,259.2 L411.0,259.6 L411.5,259.7 L412.0,260.1 L412.5,259.5 L413.0,260.3 L413.5,260.3 L414.0,260.9 L414.5,261.0 L415.0,261.7 L415.5,262.7 L416.0,264.0 L416.5,264.4 L417.0,266.5 L417.5,269.6 L418.0,273.2 L418.5,272.0 L419.0,267.6 L419.5,266.2 L420.0,264.8 L420.5,263.2 L421.0,261.9 L421.5,262.1 L422.0,261.0 L422.5,261.1 L423.0,260.4 L423.5,260.4 L424.0,259.5 L424.5,259.9 L425.0,259.3 L425.5,259.4 L426.0,259.8 L426.5,259.2 L427.0,259.4 L427.5,259.7 L428.0,260.1 L428.5,260.2 L429.0,260.3 L429.5,260.9 L430.0,262.0 L430.5,262.8 L431.0,262.8 L431.5,264.5 L432.0,266.2 L432.5,267.8 L433.0,273.4 L433.5,274.6 L434.0,269.0 L434.5,266.4 L435.0,264.8 L435.5,263.3 L436.0,262.5 L436.5,261.9 L437.0,261.2 L437.5,261.0 L438.0,260.4 L438.5,260.1 L439.0,259.4 L439.5,259.8 L440.0,259.6 L440.5,259.2 L441.0,259.8 L441.5,259.5 L442.0,259.3 L442.5,259.8 L443.0,259.6 L443.5,259.9 L444.0,260.5 L444.5,260.6 L445.0,261.5 L445.5,262.2 L446.0,262.5 L446.5,264.2 L447.0,265.0 L447.5,267.7 L448.0,271.3 L448.5,276.3 L449.0,269.6 L449.5,267.0 L450.0,265.0 L450.5,264.3 L451.0,262.5 L451.5,262.4 L452.0,261.9 L452.5,261.2 L453.0,260.8 L453.5,259.9 L454.0,260.4 L454.5,259.7 L455.0,260.1 L455.5,259.9 L456.0,259.2 L456.5,260.0 L457.0,259.2 L457.5,259.6 L458.0,260.2 L458.5,259.8 L459.0,260.9 L459.5,260.7 L460.0,261.7 L460.5,261.6 L461.0,262.7 L461.5,264.1 L461.5,264.7 L462.8,246.0 L464.1,267.4 L464.5,267.4 L465.0,265.2 L465.5,264.6 L466.0,263.3 L466.5,262.7 L467.0,261.3 L467.5,261.4 L468.0,260.3 L468.5,260.3 L469.0,260.1 L469.5,259.7 L470.0,260.0 L470.5,259.6 L471.0,259.6 L471.5,259.1 L472.0,260.1 L472.5,259.8 L473.0,259.8 L473.5,260.4 L474.0,260.2 L474.5,261.3 L475.0,261.3 L475.5,261.7 L476.0,262.8 L476.5,263.3 L477.0,264.2 L477.5,266.4 L478.0,268.1 L478.5,274.2 L479.0,273.7 L479.5,268.7 L480.0,266.6 L480.5,264.6 L481.0,263.5 L481.5,262.3 L482.0,261.3 L482.5,260.8 L483.0,260.4 L483.5,260.5 L484.0,260.0 L484.5,259.9 L485.0,260.1 L485.5,259.2 L486.0,259.2 L486.5,259.0 L487.0,259.1 L487.5,259.5 L488.0,259.4 L488.5,259.9 L489.0,260.0 L489.5,260.7 L490.0,261.2 L490.5,261.3 L491.0,262.4 L491.5,263.1 L492.0,263.8 L492.5,266.0 L493.0,267.4 L493.5,271.3 L494.0,275.4 L494.5,269.8 L495.0,267.1 L495.5,265.2 L496.0,263.6 L496.5,262.5 L497.0,261.5 L497.5,261.5 L498.0,261.0 L498.5,260.3 L499.0,260.3 L499.5,259.9 L500.0,260.2 L500.5,259.8 L501.0,259.3 L501.5,259.0 L502.0,259.6 L502.5,259.5 L503.0,259.5 L503.5,259.5 L504.0,260.5 L504.5,260.0 L505.0,261.0 L505.5,261.9 L506.0,261.7 L506.5,262.5 L507.0,263.9 L507.5,265.1 L508.0,267.1 L508.5,270.4 L509.0,276.6 L509.5,270.9 L510.0,267.2 L510.5,265.0 L511.0,264.4 L511.5,263.3 L512.0,262.4 L512.5,261.1 L513.0,261.4 L513.5,260.8 L514.0,260.2 L514.5,260.2 L515.0,259.7 L515.5,259.4 L516.0,259.1 L516.5,259.2 L517.0,259.4 L517.5,259.8 L518.0,259.9 L518.5,260.2 L519.0,260.3 L519.5,260.2 L520.0,260.9 L520.5,261.2 L521.0,262.1 L521.5,262.6 L522.0,263.3 L522.5,264.8 L523.0,266.8 L523.5,268.6 L524.0,273.2 L524.5,272.3 L525.0,268.0 L525.5,265.7 L526.0,264.7 L526.5,263.7 L527.0,262.7 L527.5,261.6 L528.0,261.6 L528.5,260.5 L529.0,260.1 L529.5,260.5 L530.0,260.0 L530.5,259.9 L531.0,259.7 L531.5,260.0 L532.0,259.8 L532.5,259.8 L533.0,260.0 L533.5,259.8 L534.0,260.3 L534.5,260.4 L535.0,260.5 L535.5,260.8 L536.0,261.8 L536.5,261.9 L537.0,263.6 L537.5,263.9 L538.0,265.3 L538.5,267.6 L539.0,272.7 L539.5,274.7 L540.0,268.9 L540.5,266.0 L541.0,264.4 L541.5,263.8 L542.0,262.8 L542.5,262.1 L543.0,261.6 L543.5,260.4 L544.0,260.5 L544.5,260.0 L545.0,260.2 L545.5,260.0 L546.0,260.0 L546.5,259.1 L547.0,259.9 L547.5,260.0 L548.0,259.2 L548.5,259.5 L549.0,259.6 L549.5,259.8 L550.0,260.9 L550.5,261.3 L551.0,261.6 L551.5,262.5 L552.0,263.0 L552.5,263.7 L553.0,264.9 L553.5,266.8 L554.0,270.8 L554.5,276.5 L555.0,270.4 L555.5,267.1 L556.0,264.8 L556.5,263.7 L557.0,262.7 L557.5,262.3 L558.0,261.4 L558.5,260.8 L559.0,261.0 L559.5,260.2 L560.0,260.3 L560.5,259.9 L561.0,259.2 L561.5,259.4 L562.0,259.4 L562.5,259.4 L563.0,259.8 L563.5,259.8 L564.0,259.6 L564.5,260.5 L565.0,260.0 L565.5,261.2 L566.0,261.0 L566.5,261.4 L567.0,262.4 L567.5,263.9 L568.0,265.3 L568.5,266.0 L569.0,269.3 L569.5,276.3 L570.0,272.6 L570.5,267.7 L571.0,265.8 L571.5,264.1 L572.0,263.5 L572.5,262.1 L573.0,262.1 L573.5,260.9 L574.0,260.4 L574.5,260.5 L575.0,260.0 L575.5,259.4 L576.0,259.8 L576.5,259.1 L577.0,259.8 L577.5,259.8 L578.0,259.7 L578.5,259.5 L579.0,259.7 L579.5,260.0 L580.0,260.7 L580.5,260.3 L581.0,261.6 L581.5,261.3 L582.0,262.1 L582.5,263.1 L583.0,264.8 L583.5,265.9 L584.0,268.1 L584.5,273.4 L585.0,274.7 L585.5,268.9 L586.0,266.3 L586.5,264.9 L587.0,263.7 L587.5,262.7 L588.0,261.7 L588.5,261.1 L589.0,260.5 L589.5,260.8 L590.0,260.3 L590.5,260.1 L591.0,259.4 L591.5,259.5 L592.0,259.8 L592.5,259.1 L593.0,259.5 L593.5,260.0 L594.0,259.5 L594.5,259.7 L595.0,260.1 L595.5,260.8 L596.0,261.4 L596.5,261.2 L597.0,261.9 L597.5,262.8 L598.0,263.9 L598.5,265.4 L599.0,267.1 L599.5,270.9 L600.0,275.1 L600.5,270.5 L601.0,267.2 L601.5,264.7 L602.0,264.3 L602.5,262.4 L603.0,261.9 L603.5,261.9 L604.0,261.2 L604.5,260.8 L605.0,260.1 L605.5,259.6 L606.0,259.9 L606.5,259.2 L607.0,259.2 L607.5,259.4 L608.0,259.4 L608.5,259.9 L609.0,259.9 L609.5,259.9 L610.0,260.3 L610.5,260.5 L611.0,260.5 L611.5,261.5 L612.0,261.9 L612.5,263.0 L613.0,264.1 L613.5,264.9 L614.0,266.8 L614.5,269.9 L615.0,272.7 L615.5,271.3 L616.0,267.9 L616.5,266.0 L617.0,264.4 L617.5,263.3 L618.0,262.6 L618.5,261.8 L619.0,261.2 L619.5,260.6 L620.0,260.1 L620.5,260.1 L621.0,259.4 L621.5,259.6 L622.0,259.8 L622.5,259.7 L623.0,259.3 L623.5,259.5 L624.0,259.6 L624.5,260.0 L625.0,260.0 L625.5,260.6 L626.0,261.2 L626.5,260.9 L627.0,261.9 L627.5,262.8 L628.0,263.3 L628.5,264.5 L629.0,266.6 L629.5,268.1 L630.0,273.9 L630.5,273.6 L631.0,268.9 L631.5,266.6 L632.0,264.6 L632.5,263.0 L633.0,262.6 L633.5,261.8 L634.0,261.4 L634.5,260.8 L635.0,260.5 L635.5,260.4 L636.0,259.9 L636.5,259.6 L637.0,260.0 L637.5,259.2 L638.0,259.4 L638.5,259.8 L639.0,259.3 L639.5,260.3 L640.0,259.9 L640.5,259.8 L641.0,260.4 L641.5,261.0 L642.0,261.1 L642.5,262.2 L643.0,263.0 L643.5,264.4 L644.0,265.4 L644.5,267.5 L645.0,271.3 L645.5,276.1 L646.0,270.1 L646.5,266.8 L647.0,264.7 L647.5,264.0 L648.0,262.6 L648.5,261.7 L649.0,261.0 L649.5,261.2 L650.0,260.8 L650.5,260.3 L651.0,259.9 L651.5,259.8 L652.0,259.3 L652.5,260.0 L653.0,259.6" stroke="#2f95e3" stroke-width="1.7" fill="none"/>
  <rect x="56.5" y="183.5" width="597" height="104" fill="none" stroke="#d6d6d6" stroke-width="1"/>
  <line x1="6" y1="162.5" x2="36" y2="162.5" stroke="#e8d44a" stroke-width="1.5"/>
</svg>
<div class="lbl" style="left:38px;top:156px;font-size:10.5px;color:#f0f0f0">Original Signal</div>
<div class="lbl" style="left:51px;top:291px;width:12px;text-align:center">0</div>
<div class="lbl" style="left:447px;top:291px;width:30px;text-align:center">15</div>
<div class="lbl" style="left:528px;top:291px;width:30px;text-align:center">18</div>
<div class="lbl" style="left:610px;top:291px;width:30px;text-align:center">21</div>
<div class="lbl" style="left:20px;top:201px;width:32px;text-align:right">0</div>
<div class="lbl" style="left:20px;top:257px;width:32px;text-align:right">-100</div>
<div class="lbl" style="left:-35.5px;top:228.5px;width:100px;text-align:center;transform:rotate(-90deg);font-size:12.8px;font-weight:normal;color:#e6e6e6;line-height:14px">Power (dBm)</div>

<!-- plot 2 -->
<svg width="671" height="650">
  <rect x="56" y="363" width="598" height="107" fill="#141414"/>
  <line x1="84.5" y1="363" x2="84.5" y2="367" class="tick"/>
<line x1="84.5" y1="465" x2="84.5" y2="469" class="tick"/>
<line x1="114.5" y1="363" x2="114.5" y2="367" class="tick"/>
<line x1="114.5" y1="465" x2="114.5" y2="469" class="tick"/>
<line x1="144.5" y1="363" x2="144.5" y2="367" class="tick"/>
<line x1="144.5" y1="465" x2="144.5" y2="469" class="tick"/>
<line x1="174.5" y1="363" x2="174.5" y2="469" class="grid"/>
<line x1="174.5" y1="363" x2="174.5" y2="367" class="tick"/>
<line x1="174.5" y1="465" x2="174.5" y2="469" class="tick"/>
<line x1="204.5" y1="363" x2="204.5" y2="367" class="tick"/>
<line x1="204.5" y1="465" x2="204.5" y2="469" class="tick"/>
<line x1="234.5" y1="363" x2="234.5" y2="367" class="tick"/>
<line x1="234.5" y1="465" x2="234.5" y2="469" class="tick"/>
<line x1="264.5" y1="363" x2="264.5" y2="367" class="tick"/>
<line x1="264.5" y1="465" x2="264.5" y2="469" class="tick"/>
<line x1="294.5" y1="363" x2="294.5" y2="469" class="grid"/>
<line x1="294.5" y1="363" x2="294.5" y2="367" class="tick"/>
<line x1="294.5" y1="465" x2="294.5" y2="469" class="tick"/>
<line x1="324.5" y1="363" x2="324.5" y2="367" class="tick"/>
<line x1="324.5" y1="465" x2="324.5" y2="469" class="tick"/>
<line x1="354.5" y1="363" x2="354.5" y2="367" class="tick"/>
<line x1="354.5" y1="465" x2="354.5" y2="469" class="tick"/>
<line x1="384.5" y1="363" x2="384.5" y2="367" class="tick"/>
<line x1="384.5" y1="465" x2="384.5" y2="469" class="tick"/>
<line x1="414.5" y1="363" x2="414.5" y2="469" class="grid"/>
<line x1="414.5" y1="363" x2="414.5" y2="367" class="tick"/>
<line x1="414.5" y1="465" x2="414.5" y2="469" class="tick"/>
<line x1="444.5" y1="363" x2="444.5" y2="367" class="tick"/>
<line x1="444.5" y1="465" x2="444.5" y2="469" class="tick"/>
<line x1="474.5" y1="363" x2="474.5" y2="367" class="tick"/>
<line x1="474.5" y1="465" x2="474.5" y2="469" class="tick"/>
<line x1="504.5" y1="363" x2="504.5" y2="367" class="tick"/>
<line x1="504.5" y1="465" x2="504.5" y2="469" class="tick"/>
<line x1="534.5" y1="363" x2="534.5" y2="469" class="grid"/>
<line x1="534.5" y1="363" x2="534.5" y2="367" class="tick"/>
<line x1="534.5" y1="465" x2="534.5" y2="469" class="tick"/>
<line x1="564.5" y1="363" x2="564.5" y2="367" class="tick"/>
<line x1="564.5" y1="465" x2="564.5" y2="469" class="tick"/>
<line x1="594.5" y1="363" x2="594.5" y2="367" class="tick"/>
<line x1="594.5" y1="465" x2="594.5" y2="469" class="tick"/>
<line x1="624.5" y1="363" x2="624.5" y2="367" class="tick"/>
<line x1="624.5" y1="465" x2="624.5" y2="469" class="tick"/>
<line x1="56" y1="375.5" x2="653" y2="375.5" class="grid"/>
<line x1="56" y1="412.5" x2="653" y2="412.5" class="grid"/>
<line x1="56" y1="449.5" x2="653" y2="449.5" class="grid"/>
<line x1="56" y1="375.5" x2="60" y2="375.5" class="tick"/>
<line x1="649" y1="375.5" x2="653" y2="375.5" class="tick"/>
<line x1="56" y1="394.5" x2="60" y2="394.5" class="tick"/>
<line x1="649" y1="394.5" x2="653" y2="394.5" class="tick"/>
<line x1="56" y1="412.5" x2="60" y2="412.5" class="tick"/>
<line x1="649" y1="412.5" x2="653" y2="412.5" class="tick"/>
<line x1="56" y1="431.5" x2="60" y2="431.5" class="tick"/>
<line x1="649" y1="431.5" x2="653" y2="431.5" class="tick"/>
<line x1="56" y1="449.5" x2="60" y2="449.5" class="tick"/>
<line x1="649" y1="449.5" x2="653" y2="449.5" class="tick"/>
  <path d="M56.5,377.6 L57.5,377.6 L58.5,376.8 L59.5,376.4 L60.5,377.0 L61.5,376.1 L62.5,377.6 L63.5,376.6 L64.5,377.7 L65.5,376.4 L66.5,376.6 L67.5,376.4 L68.5,376.7 L69.5,376.2 L70.5,375.8 L71.5,377.4 L72.5,376.4 L73.5,376.3 L74.5,376.5 L75.5,376.9 L76.5,376.7 L77.5,377.2 L78.5,377.3 L79.5,376.6 L80.5,377.8 L81.5,377.7 L82.5,375.9 L83.5,377.6 L84.5,377.8 L85.5,377.5 L86.5,376.1 L87.5,377.6 L88.5,377.2 L89.5,375.8 L90.5,375.8 L91.5,377.9 L92.5,377.2 L93.5,376.4 L94.5,376.0 L95.5,376.1 L96.5,376.3 L97.5,377.5 L98.5,376.6 L99.5,376.1 L100.5,377.8 L101.5,377.5 L102.5,376.2 L103.5,377.8 L104.5,377.1 L105.5,377.5 L106.5,377.3 L107.5,377.8 L108.5,377.5 L109.5,377.6 L110.5,376.2 L111.5,377.3 L112.5,377.0 L113.5,377.4 L114.5,376.8 L115.5,377.7 L116.5,377.0 L117.5,376.4 L118.5,376.3 L119.5,376.1 L120.5,376.9 L121.5,375.9 L122.5,376.8 L123.5,376.1 L124.5,376.9 L125.5,376.9 L126.5,377.0 L127.5,377.7 L128.5,375.8 L129.5,377.6 L130.5,376.8 L131.5,377.0 L132.5,377.3 L133.5,377.6 L134.5,376.6 L135.5,376.7 L136.5,377.9 L137.5,376.0 L138.5,377.2 L139.5,377.2 L140.5,375.9 L141.5,377.1 L142.5,377.3 L143.5,377.8 L144.5,376.5 L145.5,378.0 L146.5,376.9 L147.5,376.9 L148.5,377.8 L149.5,375.9 L150.5,377.4 L151.5,377.2 L152.5,376.5 L153.5,377.7 L154.5,376.6 L155.5,376.8 L156.5,377.0 L157.5,377.5 L158.5,376.3 L159.5,376.8 L160.5,376.7 L161.5,377.0 L162.5,377.6 L163.5,376.4 L164.5,377.6 L165.5,376.7 L166.5,376.9 L167.5,376.4 L168.5,376.9 L169.5,377.9 L170.5,377.2 L171.5,377.5 L172.5,376.5 L173.5,376.5 L174.5,376.5 L175.5,377.1 L176.5,377.2 L177.5,377.5 L178.5,375.9 L179.5,377.4 L180.5,377.7 L181.5,377.0 L182.5,375.9 L183.5,376.5 L184.5,375.8 L185.5,376.2 L186.5,377.8 L187.5,377.1 L188.5,377.2 L189.5,377.5 L190.5,377.8 L191.5,377.1 L192.5,377.2 L193.5,377.2 L194.5,377.3 L195.5,377.1 L196.5,377.3 L197.5,376.3 L198.5,377.3 L199.5,376.8 L200.5,377.5 L201.5,376.0 L202.5,376.2 L203.5,375.9 L204.5,377.5 L205.5,377.8 L206.5,377.2 L207.5,376.6 L208.5,377.6 L209.5,377.5 L210.5,377.0 L211.5,376.4 L212.5,376.5 L213.5,376.7 L214.5,376.5 L215.5,376.7 L216.5,377.2 L217.5,377.9 L218.5,375.9 L219.5,377.0 L220.5,375.9 L221.5,376.1 L222.5,377.6 L223.5,377.1 L224.5,377.8 L225.5,376.8 L226.5,375.8 L227.5,376.7 L228.5,377.1 L229.5,377.9 L230.5,378.0 L231.5,376.8 L232.5,376.7 L233.5,376.0 L234.5,377.2 L235.5,376.3 L236.5,376.1 L237.5,375.8 L238.5,375.8 L239.5,377.3 L240.5,376.1 L241.5,377.9 L242.5,376.0 L243.5,377.7 L244.5,376.1 L245.5,375.8 L246.5,377.4 L247.5,376.3 L248.5,377.4 L249.5,376.2 L250.5,375.9 L251.5,377.5 L252.5,377.4 L253.5,377.7 L254.5,377.4 L255.5,376.0 L256.5,377.2 L257.5,377.4 L258.5,376.8 L259.5,377.9 L260.5,376.4 L261.5,377.9 L262.5,377.4 L263.5,375.8 L264.5,375.8" stroke="#e8d44a" stroke-width="1.1" fill="none"/>
  <path d="M56.5,376.2 L57.0,376.4 L57.5,375.4 L58.0,375.7 L58.5,376.3 L59.0,375.5 L59.5,376.5 L60.0,376.0 L60.5,375.4 L61.0,375.8 L61.5,376.1 L62.0,375.9 L62.5,376.2 L63.0,375.5 L63.5,376.4 L64.0,375.8 L64.5,376.2 L65.0,376.2 L65.5,375.9 L66.0,375.8 L66.5,376.4 L67.0,376.6 L67.5,376.4 L68.0,376.1 L68.5,375.7 L69.0,375.4 L69.5,376.7 L70.0,376.3 L70.5,376.5 L71.0,375.8 L71.5,376.1 L72.0,376.7 L72.5,376.5 L73.0,376.1 L73.5,375.7 L74.0,375.9 L74.5,376.5 L75.0,375.8 L75.5,376.3 L76.0,376.1 L76.5,376.6 L77.0,376.4 L77.5,375.7 L78.0,375.3 L78.5,375.7 L79.0,375.9 L79.5,376.1 L80.0,376.4 L80.5,376.5 L81.0,375.4 L81.5,376.5 L82.0,376.4 L82.5,376.5 L83.0,376.1 L83.5,375.7 L84.0,376.5 L84.5,376.4 L85.0,376.3 L85.5,376.6 L86.0,375.8 L86.5,375.4 L87.0,376.1 L87.5,376.4 L88.0,375.6 L88.5,376.4 L89.0,376.6 L89.5,375.6 L90.0,376.1 L90.5,376.2 L91.0,376.0 L91.5,375.6 L92.0,375.7 L92.5,376.4 L93.0,376.4 L93.5,375.9 L94.0,375.4 L94.5,376.4 L95.0,376.4 L95.5,375.6 L96.0,376.1 L96.5,376.6 L97.0,376.5 L97.5,376.0 L98.0,376.0 L98.5,376.1 L99.0,375.6 L99.5,375.6 L100.0,375.6 L100.5,376.3 L101.0,375.8 L101.5,376.1 L102.0,375.9 L102.5,376.0 L103.0,375.5 L103.5,375.4 L104.0,376.7 L104.5,375.8 L105.0,375.4 L105.5,376.2 L106.0,376.4 L106.5,375.5 L107.0,376.1 L107.5,375.8 L108.0,376.0 L108.5,375.3 L109.0,375.3 L109.5,376.7 L110.0,376.5 L110.5,376.0 L111.0,376.1 L111.5,375.7 L112.0,376.4 L112.5,375.9 L113.0,376.6 L113.5,376.4 L114.0,376.4 L114.5,376.6 L115.0,375.7 L115.5,375.4 L116.0,375.6 L116.5,375.6 L117.0,375.4 L117.5,375.4 L118.0,376.1 L118.5,376.5 L119.0,375.9 L119.5,376.6 L120.0,376.6 L120.5,375.4 L121.0,376.1 L121.5,375.9 L122.0,375.5 L122.5,376.6 L123.0,375.7 L123.5,376.1 L124.0,376.2 L124.5,376.6 L125.0,376.2 L125.5,375.9 L126.0,375.9 L126.5,375.5 L127.0,376.7 L127.5,376.7 L128.0,375.6 L128.5,375.4 L129.0,375.7 L129.5,375.8 L130.0,376.6 L130.5,376.6 L131.0,376.5 L131.5,375.4 L132.0,376.4 L132.5,376.3 L133.0,376.2 L133.5,376.7 L134.0,375.4 L134.5,375.5 L135.0,376.4 L135.5,376.6 L136.0,376.2 L136.5,375.7 L137.0,376.1 L137.5,376.4 L138.0,375.4 L138.5,375.8 L139.0,375.7 L139.5,375.5 L140.0,376.0 L140.5,375.5 L141.0,375.6 L141.5,375.5 L142.0,376.2 L142.5,375.3 L143.0,376.3 L143.5,375.6 L144.0,375.4 L144.5,376.6 L145.0,375.6 L145.5,376.6 L146.0,376.5 L146.5,376.5 L147.0,375.5 L147.5,375.9 L148.0,375.4 L148.5,376.6 L149.0,376.5 L149.5,376.2 L150.0,375.9 L150.5,375.8 L151.0,376.5 L151.5,376.0 L152.0,376.2 L152.5,375.5 L153.0,375.6 L153.5,375.4 L154.0,376.3 L154.5,376.1 L155.0,375.5 L155.5,376.5 L156.0,375.7 L156.5,375.9 L157.0,375.5 L157.5,375.7 L158.0,376.5 L158.5,375.8 L159.0,375.5 L159.5,376.0 L160.0,375.7 L160.5,376.6 L161.0,375.5 L161.5,376.7 L162.0,375.4 L162.5,376.6 L163.0,376.2 L163.5,375.6 L164.0,376.0 L164.5,375.7 L165.0,375.7 L165.5,375.6 L166.0,375.8 L166.5,376.7 L167.0,376.7 L167.5,376.6 L168.0,375.4 L168.5,375.7 L169.0,376.6 L169.5,375.4 L170.0,376.3 L170.5,375.7 L171.0,376.7 L171.5,375.3 L172.0,376.4 L172.5,375.8 L173.0,375.5 L173.5,375.3 L174.0,376.5 L174.5,376.0 L175.0,375.6 L175.5,375.9 L176.0,376.6 L176.5,375.6 L177.0,376.1 L177.5,375.5 L178.0,375.6 L178.5,376.4 L179.0,376.3 L179.5,375.6 L180.0,375.4 L180.5,375.4 L181.0,376.2 L181.5,376.0 L182.0,375.7 L182.5,375.6 L183.0,376.2 L183.5,376.3 L184.0,376.4 L184.5,376.1 L185.0,375.6 L185.5,375.4 L186.0,376.3 L186.5,375.9 L187.0,376.3 L187.5,375.4 L188.0,376.4 L188.5,375.8 L189.0,376.5 L189.5,376.5 L190.0,376.0 L190.5,375.3 L191.0,376.6 L191.5,376.0 L192.0,376.5 L192.5,375.7 L193.0,375.6 L193.5,376.5 L194.0,375.8 L194.5,375.5 L195.0,375.8 L195.5,376.1 L196.0,375.3 L196.5,376.0 L197.0,375.9 L197.5,376.0 L198.0,375.5 L198.5,376.3 L199.0,376.4 L199.5,376.5 L200.0,375.7 L200.5,376.3 L201.0,375.8 L201.5,376.4 L202.0,375.4 L202.5,376.5 L203.0,376.6 L203.5,376.0 L204.0,376.0 L204.5,376.0 L205.0,376.1 L205.5,375.3 L206.0,376.7 L206.5,375.6 L207.0,375.6 L207.5,375.4 L208.0,375.7 L208.5,376.4 L209.0,375.3 L209.5,375.4 L210.0,376.3 L210.5,375.6 L211.0,375.3 L211.5,376.1 L212.0,376.1 L212.5,376.0 L213.0,376.3 L213.5,375.4 L214.0,376.5 L214.5,376.3 L215.0,375.4 L215.5,375.5 L216.0,376.0 L216.5,376.0 L217.0,375.7 L217.5,375.5 L218.0,375.9 L218.5,375.5 L219.0,376.1 L219.5,376.5 L220.0,375.5 L220.5,376.1 L221.0,376.3 L221.5,375.5 L222.0,376.5 L222.5,376.6 L223.0,375.8 L223.5,375.9 L224.0,376.5 L224.5,376.0 L225.0,375.9 L225.5,376.6 L226.0,376.4 L226.5,375.8 L227.0,375.6 L227.5,375.8 L228.0,375.9 L228.5,376.7 L229.0,376.4 L229.5,376.6 L230.0,376.4 L230.5,376.5 L231.0,375.4 L231.5,376.0 L232.0,376.6 L232.5,376.6 L233.0,375.6 L233.5,375.9 L234.0,376.2 L234.5,375.8 L235.0,376.0 L235.5,375.4 L236.0,375.9 L236.5,376.0 L237.0,375.3 L237.5,375.5 L238.0,376.7 L238.5,376.4 L239.0,376.6 L239.5,376.2 L240.0,376.4 L240.5,376.5 L241.0,376.5 L241.5,375.3 L242.0,376.2 L242.5,375.7 L243.0,376.2 L243.5,375.7 L244.0,376.1 L244.5,376.6 L245.0,376.2 L245.5,375.7 L246.0,376.0 L246.5,375.9 L247.0,376.6 L247.5,375.7 L248.0,375.7 L248.5,376.2 L249.0,375.5 L249.5,376.1 L250.0,376.6 L250.5,376.0 L251.0,375.7 L251.5,376.0 L252.0,376.0 L252.5,375.5 L253.0,375.5 L253.5,375.5 L254.0,375.7 L254.5,375.9 L255.0,375.7 L255.5,375.6 L256.0,375.4 L256.5,376.1 L257.0,376.5 L257.5,376.2 L258.0,376.1 L258.5,376.2 L259.0,375.6 L259.5,376.3 L260.0,375.9 L260.5,376.1 L261.0,376.2 L261.5,376.0 L262.0,375.7 L262.5,375.6 L263.0,375.6 L263.5,376.0 L264.0,375.8 L264.5,376.1 L265.0,375.3 L265.5,375.8 L266.0,376.5 L266.5,375.6 L267.0,376.1 L267.5,376.0 L268.0,376.1 L268.5,376.8 L269.0,376.2 L269.5,376.7 L270.0,376.1 L270.5,376.1 L271.0,376.9 L271.5,376.6 L272.0,376.2 L272.5,376.6 L273.0,376.7 L273.5,377.0 L274.0,376.5 L274.5,376.6 L275.0,377.4 L275.5,377.2 L276.0,376.7 L276.5,376.9 L277.0,377.0 L277.5,377.4 L278.0,377.3 L278.5,377.6 L279.0,377.6 L279.5,377.4 L280.0,377.6 L280.5,377.7 L281.0,377.8 L281.5,377.7 L282.0,378.2 L282.5,378.4 L283.0,378.8 L283.5,378.3 L284.0,379.3 L284.5,378.6 L285.0,379.6 L285.5,379.7 L286.0,379.8 L286.5,380.5 L287.0,380.3 L287.5,380.4 L288.0,381.0 L288.5,381.3 L289.0,381.3 L289.5,381.4 L290.0,381.8 L290.5,382.1 L291.0,382.7 L291.5,382.6 L292.0,383.1 L292.5,383.6 L293.0,383.7 L293.5,384.0 L294.0,384.8 L294.5,385.2 L295.0,385.1 L295.5,385.4 L296.0,385.5 L296.5,386.0 L297.0,386.2 L297.5,387.0 L298.0,387.4 L298.5,387.3 L299.0,388.5 L299.5,388.3 L300.0,389.2 L300.5,389.6 L301.0,390.1 L301.5,389.7 L302.0,390.3 L302.5,391.2 L303.0,390.7 L303.5,391.1 L304.0,392.0 L304.5,392.3 L305.0,393.2 L305.5,393.4 L306.0,393.5 L306.5,394.6 L307.0,394.7 L307.5,395.2 L308.0,396.0 L308.5,396.2 L309.0,396.8 L309.5,397.6 L310.0,397.9 L310.5,399.0 L311.0,399.3 L311.5,399.8 L312.0,399.9 L312.5,400.7 L313.0,401.3 L313.5,402.1 L314.0,402.9 L314.5,404.1 L315.0,405.0 L315.5,405.4 L316.0,406.2 L316.5,407.2 L317.0,408.4 L317.5,408.6 L318.0,409.6 L318.5,411.1 L319.0,411.7 L319.5,413.0 L320.0,414.9 L320.5,415.9 L321.0,416.8 L321.5,418.1 L322.0,420.9 L322.5,422.7 L323.0,424.8 L323.5,427.0 L324.0,430.5 L324.5,433.6 L325.0,437.0 L325.5,440.7 L326.0,437.6 L326.5,435.5 L327.0,434.7 L327.5,435.2 L328.0,435.2 L328.5,437.3 L329.0,438.9 L329.5,442.1 L330.0,455.0 L330.5,446.9 L331.0,441.8 L331.5,440.0 L332.0,437.2 L332.5,436.6 L333.0,436.6 L333.5,435.6 L334.0,435.4 L334.5,434.5 L335.0,435.1 L335.5,434.9 L336.0,435.9 L336.5,436.4 L337.0,438.1 L337.5,438.7 L338.0,440.4 L338.5,442.9 L339.0,449.2 L339.5,454.3 L340.0,445.3 L340.5,441.9 L341.0,439.8 L341.5,438.9 L342.0,438.2 L342.5,437.0 L343.0,436.7 L343.5,435.0 L344.0,434.6 L344.5,435.6 L345.0,434.7 L345.5,434.8 L346.0,434.6 L346.5,435.0 L347.0,435.1 L347.5,436.9 L348.0,437.0 L348.5,437.5 L349.0,438.8 L349.5,440.2 L350.0,441.8 L350.5,446.5 L351.0,454.0 L351.5,452.8 L352.0,445.7 L352.5,442.9 L353.0,440.3 L353.5,438.5 L354.0,438.8 L354.5,437.8 L355.0,436.3 L355.5,436.7 L356.0,436.1 L356.5,435.0 L357.0,435.3 L357.5,435.8 L358.0,435.7 L358.5,434.7 L359.0,435.1 L359.5,435.9 L360.0,436.7 L360.5,437.3 L361.0,438.9 L361.5,439.0 L362.0,440.5 L362.5,441.0 L363.0,442.6 L363.5,445.4 L364.0,449.5 L364.5,456.4 L365.0,450.3 L365.5,446.3 L366.0,443.0 L366.5,441.9 L367.0,440.4 L367.5,439.4 L368.0,438.0 L368.5,437.4 L369.0,438.0 L369.5,436.9 L370.0,436.4 L370.5,436.0 L371.0,436.0 L371.5,435.9 L372.0,436.6 L372.5,436.1 L373.0,436.0 L373.5,437.1 L374.0,436.4 L374.5,437.1 L375.0,438.6 L375.5,438.1 L376.0,439.4 L376.5,441.1 L377.0,442.4 L377.5,443.1 L378.0,445.9 L378.5,451.0 L379.0,452.7 L379.5,451.5 L380.0,445.8 L380.5,444.5 L381.0,442.0 L381.5,440.2 L382.0,439.6 L382.5,438.2 L383.0,438.5 L383.5,437.2 L384.0,437.8 L384.5,437.0 L385.0,436.4 L385.5,436.0 L386.0,436.5 L386.5,436.9 L387.0,435.7 L387.5,436.5 L388.0,436.7 L388.5,436.6 L389.0,437.8 L389.5,437.6 L390.0,438.6 L390.5,439.2 L391.0,439.7 L391.5,441.0 L392.0,442.0 L392.5,444.1 L393.0,448.3 L393.5,453.7 L394.0,454.2 L394.5,448.5 L395.0,445.8 L395.5,443.3 L396.0,441.9 L396.5,440.4 L397.0,439.0 L397.5,438.6 L398.0,437.8 L398.5,437.2 L399.0,437.7 L399.5,436.6 L400.0,436.6 L400.5,437.2 L401.0,436.8 L401.5,436.9 L402.0,435.7 L402.5,436.0 L403.0,435.7 L403.5,437.0 L404.0,437.2 L404.5,437.0 L405.0,437.5 L405.5,438.4 L406.0,439.1 L406.5,439.1 L407.0,441.0 L407.5,441.4 L408.0,443.3 L408.5,444.6 L409.0,447.6 L409.5,455.2 L410.0,457.5 L410.5,449.4 L411.0,444.9 L411.5,442.8 L412.0,441.4 L412.5,440.2 L413.0,439.4 L413.5,438.8 L414.0,437.6 L414.5,437.5 L415.0,437.6 L415.5,436.5 L416.0,437.3 L416.5,436.6 L417.0,436.7 L417.5,435.9 L418.0,436.6 L418.5,436.1 L419.0,435.7 L419.5,437.2 L420.0,437.3 L420.5,436.9 L421.0,436.9 L421.5,438.7 L422.0,438.9 L422.5,438.7 L423.0,440.0 L423.5,440.9 L424.0,443.4 L424.5,444.4 L425.0,448.5 L425.5,453.8 L426.0,454.6 L426.5,450.0 L427.0,445.8 L427.5,444.1 L428.0,442.6 L428.5,440.5 L429.0,439.2 L429.5,439.8 L430.0,438.3 L430.5,438.5 L431.0,437.7 L431.5,437.4 L432.0,437.3 L432.5,436.8 L433.0,436.3 L433.5,435.6 L434.0,436.2 L434.5,436.4 L435.0,437.1 L435.5,436.0 L436.0,437.3 L436.5,436.4 L437.0,437.9 L437.5,438.5 L438.0,438.2 L438.5,439.4 L439.0,440.9 L439.5,441.5 L440.0,442.7 L440.5,444.0 L441.0,446.3 L441.5,451.4 L442.0,456.7 L442.5,450.5 L443.0,446.4 L443.5,443.6 L444.0,442.8 L444.5,441.4 L445.0,439.7 L445.5,438.8 L446.0,438.6 L446.5,437.9 L447.0,438.2 L447.5,436.9 L448.0,436.5 L448.5,437.2 L449.0,435.9 L449.5,436.4 L450.0,436.0 L450.5,436.4 L451.0,436.8 L451.5,436.0 L452.0,437.0 L452.5,437.2 L453.0,437.3 L453.5,438.3 L454.0,438.9 L454.5,438.4 L455.0,439.5 L455.5,440.6 L456.0,441.6 L456.5,443.0 L457.0,445.7 L457.5,449.2 L458.0,457.9 L458.5,453.5 L459.0,447.3 L459.5,444.7 L460.0,443.0 L460.5,441.4 L461.0,439.9 L461.5,438.9 L462.0,438.0 L462.5,439.0 L463.0,438.1 L463.5,436.6 L464.0,437.3 L464.5,437.5 L465.0,436.6 L465.5,435.7 L466.0,436.3 L466.5,435.8 L467.0,436.4 L467.5,435.7 L468.0,437.3 L468.5,437.2 L469.0,437.5 L469.5,438.3 L470.0,438.4 L470.5,438.4 L471.0,439.1 L471.5,439.8 L472.0,440.8 L472.5,443.4 L473.0,445.4 L473.0,447.4 L474.3,417.5 L475.6,443.4 L476.0,443.4 L476.5,442.7 L477.0,441.5 L477.5,440.3 L478.0,438.9 L478.5,438.0 L479.0,438.4 L479.5,437.2 L480.0,436.9 L480.5,436.9 L481.0,436.4 L481.5,437.0 L482.0,435.9 L482.5,435.6 L483.0,436.5 L483.5,436.9 L484.0,436.9 L484.5,437.4 L485.0,437.8 L485.5,437.4 L486.0,437.9 L486.5,437.9 L487.0,438.7 L487.5,440.0 L488.0,440.2 L488.5,442.4 L489.0,443.2 L489.5,445.8 L490.0,450.2 L490.5,455.4 L491.0,453.3 L491.5,448.0 L492.0,444.6 L492.5,443.5 L493.0,440.9 L493.5,441.1 L494.0,440.2 L494.5,439.3 L495.0,438.1 L495.5,437.4 L496.0,437.6 L496.5,437.0 L497.0,436.6 L497.5,436.3 L498.0,436.3 L498.5,436.6 L499.0,436.9 L499.5,435.8 L500.0,436.1 L500.5,436.5 L501.0,437.0 L501.5,436.9 L502.0,437.1 L502.5,437.4 L503.0,438.3 L503.5,439.2 L504.0,440.9 L504.5,441.9 L505.0,443.1 L505.5,445.1 L506.0,447.5 L506.5,451.3 L507.0,458.2 L507.5,451.0 L508.0,447.4 L508.5,444.7 L509.0,442.4 L509.5,441.4 L510.0,441.0 L510.5,439.4 L511.0,438.9 L511.5,437.8 L512.0,437.4 L512.5,437.8 L513.0,436.1 L513.5,436.2 L514.0,436.8 L514.5,436.3 L515.0,435.6 L515.5,436.1 L516.0,436.5 L516.5,436.4 L517.0,436.7 L517.5,437.0 L518.0,437.1 L518.5,437.0 L519.0,437.6 L519.5,439.4 L520.0,439.5 L520.5,439.7 L521.0,442.0 L521.5,442.5 L522.0,444.1 L522.5,447.5 L523.0,452.0 L523.5,456.6 L524.0,450.7 L524.5,446.1 L525.0,444.3 L525.5,441.8 L526.0,441.2 L526.5,440.3 L527.0,438.6 L527.5,438.4 L528.0,437.3 L528.5,437.5 L529.0,437.7 L529.5,436.9 L530.0,437.0 L530.5,436.9 L531.0,435.7 L531.5,437.1 L532.0,435.7 L532.5,436.9 L533.0,436.3 L533.5,436.2 L534.0,437.7 L534.5,437.4 L535.0,438.1 L535.5,437.6 L536.0,439.2 L536.5,438.8 L537.0,440.0 L537.5,441.3 L538.0,442.2 L538.5,445.0 L539.0,447.2 L539.5,452.6 L540.0,457.4 L540.5,450.1 L541.0,447.0 L541.5,444.2 L542.0,443.0 L542.5,441.2 L543.0,440.7 L543.5,439.8 L544.0,438.0 L544.5,438.4 L545.0,437.3 L545.5,437.6 L546.0,437.1 L546.5,437.1 L547.0,435.9 L547.5,436.1 L548.0,436.7 L548.5,436.7 L549.0,435.7 L549.5,436.7 L550.0,436.1 L550.5,437.0 L551.0,437.8 L551.5,437.1 L552.0,438.9 L552.5,439.1 L553.0,439.1 L553.5,439.9 L554.0,441.4 L554.5,443.4 L555.0,444.9 L555.5,446.9 L556.0,451.7 L556.5,457.8 L557.0,451.1 L557.5,446.1 L558.0,444.3 L558.5,442.1 L559.0,441.5 L559.5,440.0 L560.0,438.7 L560.5,439.2 L561.0,438.1 L561.5,437.9 L562.0,437.7 L562.5,437.6 L563.0,435.9 L563.5,436.2 L564.0,435.8 L564.5,436.3 L565.0,436.8 L565.5,435.6 L566.0,436.0 L566.5,437.2 L567.0,437.2 L567.5,437.1 L568.0,437.6 L568.5,437.6 L569.0,439.2 L569.5,439.2 L570.0,440.9 L570.5,441.5 L571.0,442.0 L571.5,444.1 L572.0,446.5 L572.5,451.9 L573.0,458.1 L573.5,450.9 L574.0,446.6 L574.5,444.3 L575.0,442.7 L575.5,441.5 L576.0,440.1 L576.5,439.2 L577.0,438.0 L577.5,438.3 L578.0,437.4 L578.5,436.5 L579.0,436.9 L579.5,437.5 L580.0,435.8 L580.5,435.8 L581.0,436.6 L581.5,435.9 L582.0,436.4 L582.5,436.1 L583.0,436.7 L583.5,436.9 L584.0,437.9 L584.5,438.3 L585.0,437.2 L585.5,438.6 L586.0,439.6 L586.5,440.6 L587.0,441.4 L587.5,442.5 L588.0,444.1 L588.5,445.9 L589.0,449.4 L589.5,454.8 L590.0,454.6 L590.5,448.9 L591.0,445.5 L591.5,442.9 L592.0,442.2 L592.5,441.0 L593.0,439.7 L593.5,439.2 L594.0,438.1 L594.5,437.9 L595.0,437.2 L595.5,436.3 L596.0,436.5 L596.5,436.3 L597.0,437.2 L597.5,436.3 L598.0,436.1 L598.5,435.9 L599.0,436.2 L599.5,436.0 L600.0,436.0 L600.5,437.6 L601.0,437.3 L601.5,437.7 L602.0,438.4 L602.5,438.6 L603.0,439.1 L603.5,439.9 L604.0,441.4 L604.5,442.9 L605.0,445.5 L605.5,448.1 L606.0,454.2 L606.5,453.9 L607.0,450.7 L607.5,446.4 L608.0,443.3 L608.5,441.9 L609.0,441.2 L609.5,440.9 L610.0,439.0 L610.5,439.0 L611.0,437.9 L611.5,438.2 L612.0,436.5 L612.5,436.9 L613.0,437.3 L613.5,436.1 L614.0,436.0 L614.5,435.5 L615.0,435.9 L615.5,436.7 L616.0,436.0 L616.5,436.5 L617.0,436.4 L617.5,437.4 L618.0,438.2 L618.5,438.3 L619.0,438.1 L619.5,439.6 L620.0,440.8 L620.5,441.3 L621.0,441.7 L621.5,444.5 L622.0,446.9 L622.5,449.7 L623.0,453.1 L623.5,453.1 L624.0,448.1 L624.5,445.8 L625.0,443.4 L625.5,442.4 L626.0,440.2 L626.5,439.4 L627.0,439.4 L627.5,438.6 L628.0,437.7 L628.5,437.7 L629.0,436.8 L629.5,436.1 L630.0,436.4 L630.5,435.7 L631.0,436.5 L631.5,436.0 L632.0,436.5 L632.5,436.0 L633.0,436.5 L633.5,436.0 L634.0,437.7 L634.5,437.4 L635.0,438.5 L635.5,437.5 L636.0,439.0 L636.5,439.9 L637.0,440.2 L637.5,440.9 L638.0,442.3 L638.5,444.1 L639.0,447.8 L639.5,451.4 L640.0,456.2 L640.5,451.0 L641.0,447.0 L641.5,444.6 L642.0,442.8 L642.5,441.6 L643.0,440.5 L643.5,439.2 L644.0,439.1 L644.5,437.8 L645.0,438.0 L645.5,437.7 L646.0,437.4 L646.5,436.4 L647.0,437.0 L647.5,437.2 L648.0,436.2 L648.5,436.3 L649.0,437.0 L649.5,435.8 L650.0,435.8 L650.5,436.8 L651.0,437.3 L651.5,437.9 L652.0,437.6 L652.5,439.2 L653.0,438.6" stroke="#2f95e3" stroke-width="1.7" fill="none"/>
  <rect x="56.5" y="363.5" width="597" height="106" fill="none" stroke="#d6d6d6" stroke-width="1"/>
  <line x1="6" y1="341.5" x2="36" y2="341.5" stroke="#e8d44a" stroke-width="1.5"/>
  <line x1="191" y1="341.5" x2="219" y2="341.5" stroke="#2f95e3" stroke-width="1.5"/>
  <!-- markers -->
  <path d="M49.2,366 L63.2,366 L56.2,376.5 Z" fill="#17538a" stroke="#e8d44a" stroke-width="1.3"/>
  <path d="M50,365.5 L64,365.5 L57,376 Z" fill="#17538a" stroke="#2f95e3" stroke-width="1.3"/>
  <path d="M76.2,366 L90.2,366 L83.2,376.5 Z" fill="#17538a" stroke="#e8d44a" stroke-width="1.3"/>
  <path d="M77,365.5 L91,365.5 L84,376 Z" fill="#17538a" stroke="#2f95e3" stroke-width="1.3"/>
  <path d="M347.5,427.5 L360.5,427.5 L354,436.5 Z" fill="#17538a" stroke="#2f95e3" stroke-width="1.3"/>
</svg>
<div class="lbl" style="left:38px;top:336px;font-size:10.3px;color:#f0f0f0">Original Signal Phase Noise</div>
<div class="lbl" style="left:222px;top:336px;font-size:10.3px;color:#f0f0f0">Filtered Signal Phase Noise</div>
<div class="a" style="left:45.4px;top:353.6px;font-size:10.3px;font-weight:bold;color:#e8d44a;line-height:12px">SN1</div>
<div class="a" style="left:46px;top:353px;font-size:10.3px;font-weight:bold;color:#35a0f0;line-height:12px">SN1</div>
<div class="a" style="left:72.4px;top:353.6px;font-size:10.3px;font-weight:bold;color:#e8d44a;line-height:12px">SN2</div>
<div class="a" style="left:73px;top:353px;font-size:10.3px;font-weight:bold;color:#35a0f0;line-height:12px">SN2</div>
<div class="a" style="left:343px;top:414px;font-size:10.3px;font-weight:bold;color:#35a0f0;line-height:12px">SN3</div>
<div class="lbl" style="left:20px;top:369px;width:32px;text-align:right">-50</div>
<div class="lbl" style="left:20px;top:406px;width:32px;text-align:right">-100</div>
<div class="lbl" style="left:20px;top:443px;width:32px;text-align:right">-150</div>
<div class="lbl" style="left:159px;top:473px;width:30px;text-align:center">4</div>
<div class="lbl" style="left:279px;top:473px;width:30px;text-align:center">8</div>
<div class="lbl" style="left:399px;top:473px;width:30px;text-align:center">12</div>
<div class="lbl" style="left:519px;top:473px;width:30px;text-align:center">16</div>
<div class="lbl" style="left:280px;top:490px;width:150px;text-align:center;font-size:12.9px;line-height:14px;font-weight:normal;color:#dedede">Frequency offset (kHz)</div>
<div class="lbl" style="left:-54px;top:410px;width:140px;text-align:center;transform:rotate(-90deg);font-size:12.8px;font-weight:normal;color:#e6e6e6;line-height:14px">Phase Noise (dBc/Hz)</div>

<!-- phase noise panel -->
<div class="a" style="left:1px;top:512px;width:670px;height:1px;background:#8c8c8c"></div>
<div class="a" style="left:1px;top:513px;width:670px;height:22px;background:#023f73"></div>
<div class="a" style="left:27px;top:518px;font-size:12.9px;line-height:14px;color:#fff;-webkit-text-stroke:0.3px #fff">Phase Noise</div>
<div class="a" style="left:1px;top:535px;width:670px;height:1px;background:#b0b0b0"></div>
<div class="a" style="left:1px;top:536px;width:670px;height:93px;background:#141414"></div>
<div class="a" style="left:1px;top:536px;width:1px;height:93px;background:#777"></div>
<div class="a" style="left:1px;top:562px;width:670px;height:1px;background:#5e5e5e"></div>
<div class="a" style="left:1px;top:585px;width:670px;height:1px;background:#5e5e5e"></div>
<div class="a" style="left:1px;top:607px;width:670px;height:1px;background:#5e5e5e"></div>
<div class="a" style="left:169px;top:536px;width:1px;height:93px;background:#5e5e5e"></div>
<div class="a" style="left:337px;top:536px;width:1px;height:93px;background:#5e5e5e"></div>
<div class="a" style="left:504px;top:536px;width:1px;height:93px;background:#5e5e5e"></div>
<div class="a" style="left:1px;top:629px;width:670px;height:3px;background:#8a8a8a"></div>

<div class="tcell" style="left:173px;top:544px;font-weight:bold;font-size:12px">SN1</div>
<div class="tcell" style="left:341px;top:544px;font-weight:bold;font-size:12px">SN2</div>
<div class="tcell" style="left:508px;top:544px;font-weight:bold;font-size:12px">SN3</div>
<div class="tcell" style="left:5px;top:568px">Frequency Offset (kHz)</div>
<div class="tcell" style="left:5px;top:590px">Original Signal Phase Noise (dB...</div>
<div class="tcell" style="left:5px;top:612px">Filtered Signal Phase Noise (dB...</div>
<div class="tcell" style="left:173px;top:568px">0.1000</div>
<div class="tcell" style="left:173px;top:590px">-52.4727</div>
<div class="tcell" style="left:173px;top:612px">-51.1713</div>
<div class="tcell" style="left:341px;top:568px">1.0000</div>
<div class="tcell" style="left:341px;top:590px">-51.6169</div>
<div class="tcell" style="left:341px;top:612px">-51.1475</div>
<div class="tcell" style="left:508px;top:568px">10.0000</div>
<div class="tcell" style="left:508px;top:612px">-134.8380</div>

<!-- status bar -->
<div class="a" style="left:1px;top:632px;width:670px;height:18px;background:#f0f0f0"></div>
<div class="st" style="left:9px">Ready</div>
<div class="st" style="left:79px">ΔT=46.4399 ms&nbsp;&nbsp;Samples/Update=2048&nbsp;&nbsp;VBW=380.7906 mHz&nbsp;&nbsp;RBW=21.5332 Hz&nbsp;&nbsp;Sample Rate=44.1000 kHz</div>
<div class="a" style="left:653px;top:632px;width:18px;height:18px;background:#f0f0f0"></div>
<svg width="20" height="20" style="left:652px;top:634px">
  <path d="M5,5 L17,5 L11,11 Z" fill="#9a9a9a"/>
  <rect x="5" y="12.5" width="12" height="2" fill="#9a9a9a"/>
</svg>

<!-- settings popup -->
<div class="a" style="left:94px;top:133px;width:332px;height:200px;border:3px solid #f5a500;background:#f3f3f3"></div>
<div class="a" style="left:97px;top:136px;width:326px;height:24px;background:#e5e5e5"></div>
<div class="a" style="left:102px;top:141px;font-size:11.7px;line-height:14px;font-weight:bold;color:#1a1a1a">Settings</div>
<div class="a" style="left:106px;top:169px;font-size:11.5px;line-height:14px;color:#1a1a1a">Frequency Offsets (Hz)</div>
<div class="a" style="left:229px;top:165px;width:155px;height:22px;border:1px solid #7a7a7a;background:#fff"></div>
<div class="a" style="left:235px;top:169px;font-size:11.5px;line-height:14px;color:#1a1a1a">[100 1000 10000]</div>
<div class="a" style="left:107px;top:213px;width:14px;height:14px;border:1px solid #5e5e5e;background:#fff"></div>
<div class="a" style="left:132px;top:204px;font-size:11.5px;line-height:14px;font-weight:bold;color:#1c5aa6">Plot Target Phase Noise</div>
<div class="a" style="left:132px;top:223px;font-size:10.8px;line-height:12px;color:#1a1a1a">Plot target phase noise profile</div>
<div class="a" style="left:106px;top:255px;font-size:11.5px;line-height:14px;color:#b0b0b0">Target Phase Noise (dBc/Hz)</div>
<div class="a" style="left:259px;top:251px;width:155px;height:22px;border:1px solid #c8c8c8;background:#f3f3f3"></div>
<div class="a" style="left:264px;top:255px;font-size:11.5px;line-height:14px;color:#b0b0b0">[-300 -300 -300]</div>
<div class="a" style="left:107px;top:299px;width:14px;height:14px;border:1px solid #5e5e5e;background:#fff"></div>
<svg width="20" height="20" style="left:104px;top:296px">
  <path d="M5.5,10 L8.5,13.5 L14,5.5" stroke="#1a1a1a" stroke-width="1.9" fill="none"/>
</svg>
<div class="a" style="left:132px;top:290px;font-size:11.5px;line-height:14px;font-weight:bold;color:#1c5aa6">Label Phase Noise</div>
<div class="a" style="left:132px;top:309px;font-size:10.6px;line-height:12px;color:#1a1a1a">Label measured phase noise</div>
</body></html>
